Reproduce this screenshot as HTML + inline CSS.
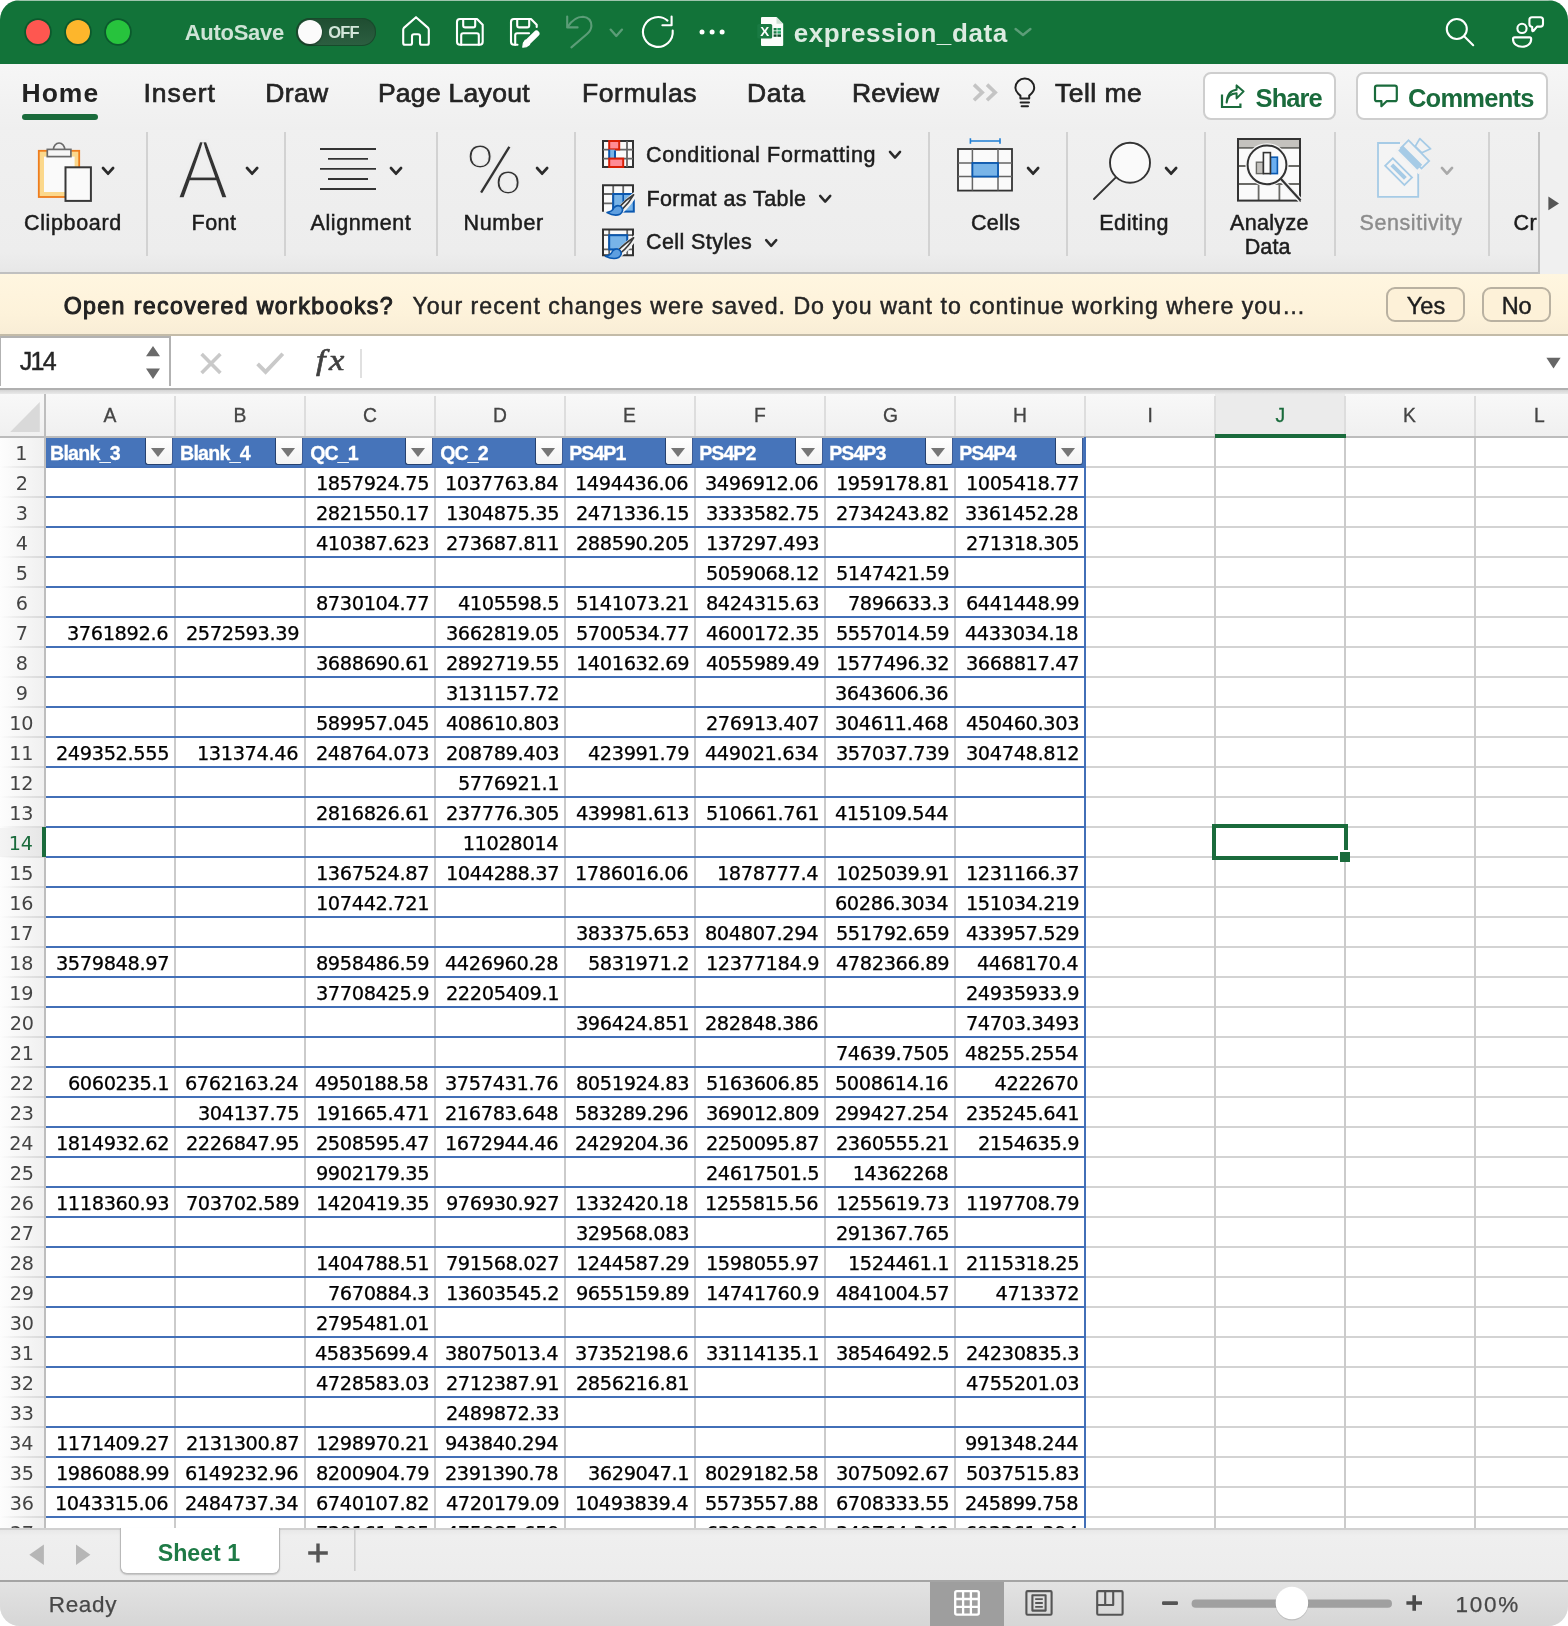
<!DOCTYPE html>
<html lang="en"><head><meta charset="utf-8"><title>expression_data</title>
<style>
*{box-sizing:border-box;margin:0;padding:0}
html,body{width:1568px;height:1626px;background:#fff;overflow:hidden}
body{font-family:"Liberation Sans","DejaVu Sans",sans-serif;color:#222;-webkit-font-smoothing:antialiased}
#win{position:absolute;left:0;top:0;width:1568px;height:1626px;border-radius:20px;overflow:hidden;background:#ececec;will-change:transform}
.abs{position:absolute}
svg{position:absolute;overflow:visible}
/* title bar */
#titlebar{position:absolute;left:0;top:0;width:1568px;height:64px;background:#127339;box-shadow:inset 0 1px 0 #9ec4ad}
.tl{position:absolute;top:20px;width:24px;height:24px;border-radius:50%;box-shadow:0 0 0 1.8px #0b5a2d}
#titlebar .tt{position:absolute;color:#d3e6da;font-weight:bold;white-space:nowrap}
.t{position:absolute;line-height:1;white-space:nowrap}
/* tabs */
#tabs{position:absolute;left:0;top:64px;width:1568px;height:66px;background:linear-gradient(#f6f6f6,#efefef)}
#tabs .tab{position:absolute;top:13px;font-size:26.5px;line-height:32px;color:#262626;white-space:nowrap}
.btn{position:absolute;top:8px;height:48px;background:#fff;border:2px solid #cecece;border-radius:8px;color:#1a7440;font-weight:bold;font-size:25px;line-height:46px;white-space:nowrap}
/* ribbon */
#ribbon{position:absolute;left:0;top:130px;width:1568px;height:144px;background:linear-gradient(#f0f0f0,#ededed 85%,#e7e7e7)}
#ribbon .sep{position:absolute;top:2px;width:2px;height:124px;background:#d2d2d2}
#ribbon .lbl{position:absolute;font-size:21px;line-height:24px;color:#1c1c1c;text-align:center;white-space:nowrap;letter-spacing:.3px}
/* msg bar */
#msgbar{position:absolute;left:0;top:273.5px;width:1568px;height:62px;background:linear-gradient(#fff6e0,#fdf2da 65%,#f8edd6);box-shadow:inset 0 -2px 0 #c3bba8}
.mbtn{position:absolute;top:13px;height:35px;border:2px solid #b9b1a1;border-radius:9px;background:#fdf1d8}
/* formula */
#formula{position:absolute;left:0;top:335.5px;width:1568px;height:58.5px;background:#fff}
/* grid */
#grid{position:absolute;left:0;top:394px;width:1568px;height:1134px;background:#fff;overflow:hidden}
.fb{position:absolute;width:27.6px;height:26.6px;background:linear-gradient(#ffffff,#f2f2f2);border-left:1.8px solid #26416f;border-bottom:1.8px solid #26416f;border-right:1px solid #3a5a94;border-radius:0 0 3px 3px}
.fb:after{content:"";position:absolute;left:5.2px;top:9.6px;border-left:7.8px solid transparent;border-right:7.8px solid transparent;border-top:9.2px solid #757575}
/* sheet tabs */
#sheettabs{position:absolute;left:0;top:1528px;width:1568px;height:53px;background:linear-gradient(#e6e6e6,#efefef 8px,#ececec)}
#status{position:absolute;left:0;top:1580px;width:1568px;height:46px;background:linear-gradient(#e3e3e3,#d6d6d6);box-shadow:inset 0 2px 0 #a4a4a4}

</style></head>
<body>
<div id="win">
<div id="titlebar">
  <div class="tl" style="left:26px;background:#fe5750"></div>
  <div class="tl" style="left:66px;background:#fdb62c"></div>
  <div class="tl" style="left:106px;background:#27c33d"></div>
  <span class="t" style="left:184.70px;top:21.60px;font-size:22px;font-weight:bold;letter-spacing:-0.276px;color:#cfe4d6;">AutoSave</span>
  <div class="abs" style="left:296px;top:18px;width:80px;height:28px;border-radius:14px;background:linear-gradient(#1f4d31,#2c5f41);box-shadow:inset 0 0 0 1px #174a2b"></div>
  <div class="abs" style="left:298px;top:20px;width:24px;height:24px;border-radius:50%;background:#fbfbfb;box-shadow:0 1px 2px rgba(0,0,0,.45)"></div>
  <span class="t" style="left:328.20px;top:23.60px;font-size:16.5px;font-weight:bold;letter-spacing:-0.807px;color:#d3e6da;">OFF</span>
  <svg width="1568" height="64" viewBox="0 0 1568 64" style="left:0;top:0" fill="none" stroke="#fff" stroke-width="2.1" stroke-linecap="round" stroke-linejoin="round">
    <!-- home -->
    <path d="M416 17.2 L404.2 27.6 Q403.2 28.6 403.2 30 V43 Q403.2 44.8 405 44.8 H410.2 Q412 44.8 412 43 V36.2 Q412 34.2 414 34.2 H418 Q420 34.2 420 36.2 V43 Q420 44.8 421.8 44.8 H427 Q428.8 44.8 428.8 43 V30 Q428.8 28.6 427.8 27.6 Z"/>
    <!-- save -->
    <path d="M460 19 H477 L482.7 24.8 V41.8 Q482.7 44.8 479.7 44.8 H460 Q457 44.8 457 41.8 V22 Q457 19 460 19 Z"/>
    <path d="M463.2 19 V25.4 Q463.2 27.4 465.2 27.4 H473.2 Q475.2 27.4 475.2 25.4 V19"/>
    <path d="M461.2 44.8 V35.2 Q461.2 33.2 463.2 33.2 H476.8 Q478.8 33.2 478.8 35.2 V44.8"/>
    <!-- save edit -->
    <path d="M536.7 27 V24.8 L531 19 H514 Q511 19 511 22 V41.8 Q511 44.8 514 44.8 H517.5"/>
    <path d="M517.2 19 V25.4 Q517.2 27.4 519.2 27.4 H527.2 Q529.2 27.4 529.2 25.4 V19"/>
    <path d="M515.2 44.8 V35.2 Q515.2 33.2 517.2 33.2 H529"/>
    <path d="M536.4 33.6 L527.4 42.4" stroke-width="6.2"/>
    <path d="M525.4 40.2 L529.6 44.6 L526.6 46.6 L522.8 47.2 L523.4 43 Z" fill="#fff" stroke-width="1.2"/>
    <!-- undo (dim) -->
    <g stroke="#5c9d78">
      <path d="M567.2 16.6 V27.4 H577.6"/>
      <path d="M567.6 27 Q574 16.8 583 16.8 Q591.4 17.6 591.4 26 Q591.2 30.4 587 34 L571.4 47.4"/>
      <path d="M610.6 29.6 L616.3 36 L622 29.6" stroke-width="2.3"/>
    </g>
    <!-- redo -->
    <path d="M672.7 30.6 A14.9 14.9 0 1 1 667.5 20.6"/>
    <path d="M671.6 16.6 V25.2 H662.4"/>
    <!-- ellipsis -->
    <g fill="#fff" stroke="none"><circle cx="702" cy="32" r="2.5"/><circle cx="712.1" cy="32" r="2.5"/><circle cx="722.1" cy="32" r="2.5"/></g>
    <!-- file icon -->
    <g stroke="none">
      <path d="M762 17 H776.5 L783.2 23.8 V45 Q783.2 46 782.2 46 H762 Q761 46 761 45 V18 Q761 17 762 17 Z" fill="#fbfdfb"/>
      <path d="M776.5 17 L783.2 23.8 H776.5 Z" fill="#cfe1d5"/>
      <rect x="773.6" y="28" width="3" height="2.4" fill="#1d7a45"/><rect x="777.4" y="28" width="3.6" height="2.4" fill="#21a366"/>
      <rect x="773.6" y="31.2" width="3" height="2.4" fill="#1d7a45"/><rect x="777.4" y="31.2" width="3.6" height="2.4" fill="#21a366"/>
      <rect x="773.6" y="34.4" width="3" height="2.4" fill="#0e4d29"/><rect x="777.4" y="34.4" width="3.6" height="2.4" fill="#0e4d29"/>
      <rect x="757.2" y="24" width="15" height="14.6" rx="1.5" fill="#1a7a43"/>
    </g>
    <text x="764.7" y="36.4" font-family="Liberation Sans, sans-serif" font-size="13.5" font-weight="bold" fill="#fff" stroke="none" text-anchor="middle">X</text>
    <!-- title chevron -->
    <path d="M1015.6 29 L1023 35 L1030.4 29" stroke="#5c9d78" stroke-width="2.4"/>
    <!-- search -->
    <circle cx="1456.8" cy="29" r="10"/>
    <path d="M1464.4 36.6 L1473.2 45.2"/>
    <!-- people -->
    <circle cx="1522" cy="28.4" r="4.6"/>
    <path d="M1513 39 Q1513 37.4 1514.6 37.4 H1529.6 Q1531.2 37.4 1531.2 39 C1531.2 44 1527 46.8 1522.1 46.8 C1517.2 46.8 1513 44 1513 39 Z"/>
    <path d="M1532 17.2 H1540.4 Q1543 17.2 1543 19.8 V24 Q1543 26.6 1540.4 26.6 H1537 L1533.4 31 Q1532.6 31.6 1532.2 30.6 V27 Q1529.4 26.6 1529.4 24 V19.8 Q1529.4 17.2 1532 17.2 Z"/>
  </svg>
  <span class="t" style="left:793.70px;top:19.50px;font-size:26px;font-weight:bold;letter-spacing:0.589px;color:#dcebe1;">expression_data</span>
</div>

<div id="tabs">
  <span class="t" style="left:21.60px;top:16.40px;font-size:26.5px;font-weight:bold;letter-spacing:0.971px;color:#222;">Home</span>
  <div class="abs" style="left:22px;top:50px;width:76px;height:6px;border-radius:3px;background:#1a6b3c"></div>
  <span class="t" style="left:143.40px;top:16.40px;font-size:26.5px;letter-spacing:1.057px;color:#242424;-webkit-text-stroke:.7px #242424;">Insert</span>
  <span class="t" style="left:265.30px;top:16.40px;font-size:26.5px;letter-spacing:0.333px;color:#242424;-webkit-text-stroke:.7px #242424;">Draw</span>
  <span class="t" style="left:377.90px;top:16.40px;font-size:26.5px;letter-spacing:0.285px;color:#242424;-webkit-text-stroke:.7px #242424;">Page Layout</span>
  <span class="t" style="left:582.00px;top:16.40px;font-size:26.5px;letter-spacing:0.573px;color:#242424;-webkit-text-stroke:.7px #242424;">Formulas</span>
  <span class="t" style="left:747.10px;top:16.40px;font-size:26.5px;letter-spacing:0.621px;color:#242424;-webkit-text-stroke:.7px #242424;">Data</span>
  <span class="t" style="left:852.00px;top:16.40px;font-size:26.5px;letter-spacing:0.030px;color:#242424;-webkit-text-stroke:.7px #242424;">Review</span>
  <span class="t" style="left:1055.00px;top:16.40px;font-size:26.5px;letter-spacing:0.467px;color:#242424;-webkit-text-stroke:.7px #242424;">Tell me</span>
  <svg width="1568" height="66" viewBox="0 64 1568 66" style="left:0;top:0" fill="none" stroke-linecap="round" stroke-linejoin="round">
    <path d="M974 84.6 L982.2 92.4 L974 100.2 M987 84.6 L995.2 92.4 L987 100.2" stroke="#c4c4c4" stroke-width="3.6" stroke-linecap="butt" stroke-linejoin="miter"/>
    <!-- bulb -->
    <path d="M1020.4 98.6 V95.6 Q1015.4 91.8 1015.4 87.8 A9.4 9.4 0 0 1 1034.2 87.8 Q1034.2 91.8 1029.2 95.6 V98.6 Z M1020.6 102.4 H1029 M1021.6 106.2 H1028" stroke="#222" stroke-width="2"/>
  </svg>
  <div class="btn" style="left:1203px;width:133px"></div>
  <div class="btn" style="left:1356px;width:192px"></div>
  <span class="t" style="left:1255.60px;top:21.90px;font-size:25.5px;font-weight:bold;letter-spacing:-0.923px;color:#1a6b3c;">Share</span>
  <span class="t" style="left:1407.90px;top:21.90px;font-size:25.5px;font-weight:bold;letter-spacing:-0.741px;color:#1a6b3c;">Comments</span>
  <svg width="1568" height="66" viewBox="0 64 1568 66" style="left:0;top:0" fill="none" stroke="#1a6b3c" stroke-width="2.2" stroke-linejoin="miter">
    <path d="M1222 94.6 V107 H1240.4 V103.4"/>
    <path d="M1226.6 102.6 Q1227.6 93.6 1236.6 93.2 V98.4 L1243.6 91.4 L1236.6 85.4 V89.8 Q1227.4 90.6 1226.6 102.6 Z" stroke-width="2" stroke-linejoin="round"/>
    <path d="M1377 85.6 H1394.8 Q1396.8 85.6 1396.8 87.6 V99.2 Q1396.8 101.2 1394.8 101.2 H1386.6 L1381.4 106.2 V101.2 H1377 Q1375 101.2 1375 99.2 V87.6 Q1375 85.6 1377 85.6 Z" stroke-linejoin="round"/>
  </svg>
</div>

<div id="ribbon">
  <div class="abs" style="left:0;top:141.8px;width:1540px;height:1.8px;background:#c0c0c0"></div>
  <div class="abs" style="left:1538px;top:2px;width:2px;height:141.5px;background:#c2c2c2"></div>
  <div class="abs" style="left:1540px;top:0;width:28px;height:144px;background:#f0f0f0"></div>
  <div class="sep" style="left:146px"></div><div class="sep" style="left:284px"></div><div class="sep" style="left:436px"></div><div class="sep" style="left:574px"></div>
  <div class="sep" style="left:928px"></div><div class="sep" style="left:1066px"></div><div class="sep" style="left:1204px"></div><div class="sep" style="left:1334px"></div><div class="sep" style="left:1488px"></div>
  <svg width="1568" height="142" viewBox="0 130 1568 142" style="left:0;top:0" fill="none" stroke-linecap="round" stroke-linejoin="round">
    <!-- clipboard -->
    <rect x="38.8" y="150.8" width="40.4" height="46.2" fill="#fbd88c" stroke="#ee7d1c" stroke-width="1.8" stroke-linejoin="miter"/>
    <rect x="44" y="156.6" width="30.6" height="35.4" fill="#fafafa"/>
    <path d="M53.4 149.8 A5.7 6.8 0 0 1 64.8 149.8" stroke="#6a6a6a" stroke-width="1.7" fill="#f0f0f0"/>
    <rect x="47.3" y="149.4" width="23.6" height="7.2" fill="#f6f6f6" stroke="#6a6a6a" stroke-width="1.7" stroke-linejoin="miter"/>
    <rect x="65.5" y="167.3" width="25.4" height="33.6" fill="#fafafa" stroke="#383838" stroke-width="2" stroke-linejoin="miter"/>
    <!-- chevrons -->
    <g stroke="#2b2b2b" stroke-width="2.7" stroke-linecap="round" stroke-linejoin="round">
      <path d="M103.00 168.00 L108.05 173.70 L113.10 168.00"/>
      <path d="M247.05 168.00 L252.10 173.70 L257.15 168.00"/>
      <path d="M390.95 168.00 L396.00 173.70 L401.05 168.00"/>
      <path d="M537.05 168.00 L542.10 173.70 L547.15 168.00"/>
      <path d="M1028.05 168.00 L1033.10 173.70 L1038.15 168.00"/>
      <path d="M1166.05 168.00 L1171.10 173.70 L1176.15 168.00"/>
      <path d="M889.95 151.90 L895.00 157.60 L900.05 151.90" stroke-width="2.5"/>
      <path d="M820.15 195.90 L825.20 201.60 L830.25 195.90" stroke-width="2.5"/>
      <path d="M766.15 240.20 L771.20 245.90 L776.25 240.20" stroke-width="2.5"/>
      <path d="M1441.95 167.90 L1447.00 173.60 L1452.05 167.90" stroke="#a9a9a9"/>
    </g>
    <!-- alignment -->
    <path d="M320 149 H376 M328 158.9 H368 M320 168.9 H376 M328 179 H368 M320 189 H376" stroke="#333" stroke-width="1.9" stroke-linecap="butt"/>
    <!-- conditional formatting -->
    <g stroke-linejoin="miter" stroke-linecap="butt">
      <rect x="603" y="141" width="30" height="26" fill="#fafafa" stroke="#333" stroke-width="2"/>
      <path d="M603 149.6 H633 M603 158.6 H633 M627 141 V167" stroke="#666" stroke-width="1.8"/>
      <rect x="609.2" y="141" width="10" height="8.4" fill="#ff8b95" stroke="#d81e05" stroke-width="2"/>
      <rect x="609.2" y="149.6" width="5.8" height="9" fill="#78b4e8" stroke="none"/><path d="M609.2 149.6 V158.6 M615 150.4 V158.6" stroke="#0a58b0" stroke-width="2"/>
      <rect x="609.2" y="158.6" width="14" height="8.4" fill="#ff8b95" stroke="#d81e05" stroke-width="2"/>
      <!-- format as table -->
      <rect x="603" y="185.2" width="30" height="25.8" fill="#fafafa" stroke="none"/>
      <path d="M603 194 H633 M603 203.4 H633 M613.2 185 V211 M623.2 185 V211" stroke="#666" stroke-width="1.8"/>
      <rect x="613.2" y="194" width="20.6" height="17.6" fill="#78b4e8" stroke="#0a58b0" stroke-width="2"/>
      <path d="M623.2 194 V211" stroke="#0a58b0" stroke-width="1.6"/>
      <path d="M603 211.8 V185.2 H633 V193" stroke="#333" stroke-width="2"/>
      <path d="M635.5 192.5 Q629 197 617 209.6 L621.4 213 Q632 203 636.6 194 Z" fill="#f1f1f1" stroke="#f1f1f1" stroke-width="2.2" stroke-linejoin="round"/>
      <path d="M633.6 194.8 Q626 199.6 618.6 207.8 L621.4 210.2 Q629 203 633.6 194.8 Z" fill="#f4f4f4" stroke="#3a3a3a" stroke-width="1.6" stroke-linejoin="round"/>
      <path d="M607 212.6 Q612.6 211.6 614 207.6 Q617.6 203.8 621.6 207.2 Q624.2 211.2 620 214.2 Q614.6 216.6 607 212.6 Z" fill="#5e9fe0" stroke="#0a58b0" stroke-width="1.6" stroke-linejoin="round"/>
      <!-- cell styles -->
      <rect x="603" y="229.4" width="30" height="25.8" fill="#fafafa" stroke="none"/>
      <path d="M603 235.2 H633 M603 249.4 H633 M609.2 229 V255 M627.2 229 V255" stroke="#666" stroke-width="1.8"/>
      <rect x="609.2" y="235.2" width="18" height="14.2" fill="#78b4e8" stroke="#0a58b0" stroke-width="2"/>
      <path d="M603 229.4 H633 V255.2 H603 Z" stroke="#333" stroke-width="2"/>
      <path d="M635.5 235.5 Q629 240 616 252.6 L620.4 256 Q632 246 636.6 237 Z" fill="#f1f1f1" stroke="#f1f1f1" stroke-width="2.2" stroke-linejoin="round"/>
      <path d="M633.6 237.8 Q626 242.6 617.6 250.8 L620.4 253.2 Q629 246 633.6 237.8 Z" fill="#f4f4f4" stroke="#3a3a3a" stroke-width="1.6" stroke-linejoin="round"/>
      <path d="M605.4 256.2 Q611.2 255.2 612.6 251 Q616.2 247.2 620.2 250.6 Q622.8 254.6 618.6 257.6 Q613.2 260 605.4 256.2 Z" fill="#5e9fe0" stroke="#0a58b0" stroke-width="1.6" stroke-linejoin="round"/>
    </g>
    <!-- cells -->
    <g stroke-linejoin="miter" stroke-linecap="butt">
      <rect x="958" y="149" width="54" height="41.6" fill="#fafafa" stroke="#333" stroke-width="1.8"/>
      <path d="M958 163 H1012 M958 176.6 H1012 M972.4 149 V190.6 M998 149 V190.6" stroke="#666" stroke-width="1.5"/>
      <rect x="972.4" y="163" width="25.6" height="13.6" fill="#78b4e8" stroke="#0a58b0" stroke-width="1.8"/>
      <path d="M970.4 141 H1000 M970.4 138.2 V143.8 M1000 138.2 V143.8" stroke="#1e7ed4" stroke-width="1.6"/>
    </g>
    <!-- editing -->
    <circle cx="1130" cy="162.8" r="20" fill="#fafafa" stroke="#333" stroke-width="1.9"/>
    <path d="M1115.6 177.6 L1094 199" stroke="#333" stroke-width="1.9"/>
    <!-- analyze data -->
    <g stroke-linejoin="miter" stroke-linecap="butt">
      <rect x="1238" y="139" width="62" height="61.6" fill="#fafafa" stroke="none"/>
      <rect x="1238" y="139" width="62" height="8.6" fill="#c4c2be"/>
      <path d="M1238 147.8 H1300 M1238 166 H1300 M1238 184 H1300 M1258.6 184 V200.6 M1279.4 184 V200.6" stroke="#6a6a66" stroke-width="1.8"/>
      <rect x="1238" y="139" width="62" height="61.6" stroke="#333" stroke-width="2"/>
      <circle cx="1267" cy="164.8" r="21.6" fill="#f6f6f6" stroke="none"/>
      <path d="M1281 179 L1300.6 200.6" stroke="#f2f2f2" stroke-width="5"/>
      <circle cx="1267" cy="164.8" r="19.4" fill="#fafafa" stroke="#333" stroke-width="2"/>
      <path d="M1281 179 L1300.6 200.6" stroke="#333" stroke-width="2.2"/>
      <rect x="1256.4" y="162.2" width="7" height="11.4" fill="#c4c2be" stroke="#6a6a66" stroke-width="1.4"/>
      <rect x="1270.4" y="157.2" width="7" height="16.4" fill="#6aaef0" stroke="#0a58b0" stroke-width="1.6"/>
      <rect x="1263.4" y="152.6" width="7" height="21" fill="#fafafa" stroke="#333" stroke-width="1.6"/>
    </g>
    <!-- sensitivity (disabled) -->
    <g stroke="#a6cbe6" stroke-width="1.8" stroke-linejoin="miter" stroke-linecap="butt">
      <rect x="1378" y="143" width="40.2" height="53.8" fill="#f4f4f4" stroke="none"/>
      <path d="M1400 143 H1378 V196.8 H1418.2 V172"/>
      <g transform="translate(1398.6 171.6) rotate(45)">
        <rect x="-13.6" y="-5.4" width="27.2" height="10.8" fill="#f4f4f4"/>
        <rect x="-9.6" y="-2" width="19.2" height="4" fill="#a6cbe6" stroke="none"/>
      </g>
      <path d="M1415.2 146.4 L1419.8 138.6 L1430.6 148.8 L1421.8 152.8 Z" fill="#f2f2f2" stroke-linejoin="round"/>
      <g transform="translate(1415 154.4) rotate(45)">
        <rect x="-16.6" y="-5.4" width="33.2" height="17" fill="#f2f2f2" stroke="none"/>
        <rect x="-14.6" y="-5.4" width="29.2" height="10.8" fill="#f2f2f2"/>
        <rect x="-14.6" y="2.2" width="27" height="7" fill="#a6cbe6" stroke="none"/>
      </g>
    </g>
    <!-- scroll arrow -->
    <path d="M1548.4 196.6 L1559 203.4 L1548.4 210.2 Z" fill="#555" stroke="none"/>
  </svg>
  <!-- big glyph icons as text -->
  <span class="abs" id="bigA" style="left:177.4px;top:-2.2px;font-size:84.5px;line-height:1;color:#333;-webkit-text-stroke:3.4px #eeeeee;transform:scaleX(.92);transform-origin:0 0">A</span>
  <span class="t" id="pc1" style="left:467.5px;top:10.8px;font-size:32.5px;color:#333;-webkit-text-stroke:1.2px #eeeeee">O</span>
  <span class="t" id="pc2" style="left:495.5px;top:36.8px;font-size:32.5px;color:#333;-webkit-text-stroke:1.2px #eeeeee">O</span>
  <span class="t" id="pc3" style="left:486.5px;top:4.6px;font-size:60px;color:#333;-webkit-text-stroke:2.4px #eeeeee;transform:rotate(31.6deg);transform-origin:7.8px 35.5px">|</span>
  <span class="t" style="left:24.00px;top:83.00px;font-size:21.5px;letter-spacing:0.641px;color:#1c1c1c;-webkit-text-stroke:.5px #1c1c1c;">Clipboard</span>
  <span class="t" style="left:191.60px;top:83.00px;font-size:21.5px;letter-spacing:0.451px;color:#1c1c1c;-webkit-text-stroke:.5px #1c1c1c;">Font</span>
  <span class="t" style="left:310.60px;top:83.00px;font-size:21.5px;letter-spacing:0.558px;color:#1c1c1c;-webkit-text-stroke:.5px #1c1c1c;">Alignment</span>
  <span class="t" style="left:463.60px;top:83.00px;font-size:21.5px;letter-spacing:0.618px;color:#1c1c1c;-webkit-text-stroke:.5px #1c1c1c;">Number</span>
  <span class="t" style="left:646.00px;top:15.00px;font-size:21.5px;letter-spacing:0.631px;color:#1c1c1c;-webkit-text-stroke:.5px #1c1c1c;">Conditional Formatting</span>
  <span class="t" style="left:646.40px;top:58.60px;font-size:21.5px;letter-spacing:0.422px;color:#1c1c1c;-webkit-text-stroke:.5px #1c1c1c;">Format as Table</span>
  <span class="t" style="left:646.00px;top:102.20px;font-size:21.5px;letter-spacing:0.419px;color:#1c1c1c;-webkit-text-stroke:.5px #1c1c1c;">Cell Styles</span>
  <span class="t" style="left:971.00px;top:83.00px;font-size:21.5px;letter-spacing:0.316px;color:#1c1c1c;-webkit-text-stroke:.5px #1c1c1c;">Cells</span>
  <span class="t" style="left:1099.20px;top:83.00px;font-size:21.5px;letter-spacing:0.586px;color:#1c1c1c;-webkit-text-stroke:.5px #1c1c1c;">Editing</span>
  <span class="t" style="left:1230.00px;top:83.00px;font-size:21.5px;letter-spacing:0.328px;color:#1c1c1c;-webkit-text-stroke:.5px #1c1c1c;">Analyze</span>
  <span class="t" style="left:1244.80px;top:106.60px;font-size:21.5px;letter-spacing:0.048px;color:#1c1c1c;-webkit-text-stroke:.5px #1c1c1c;">Data</span>
  <span class="t" style="left:1359.60px;top:83.00px;font-size:21.5px;letter-spacing:0.557px;color:#8c8c8c;-webkit-text-stroke:.4px #8c8c8c;">Sensitivity</span>
  <div class="abs" style="left:1500px;top:70px;width:37.6px;height:40px;overflow:hidden"><span class="t" style="left:13.50px;top:13.00px;font-size:21.5px;letter-spacing:0.473px;color:#1c1c1c;-webkit-text-stroke:.5px #1c1c1c;">Cr</span></div>
</div>

<div id="msgbar">
  <span class="t" style="left:63.70px;top:21.60px;font-size:23.2px;letter-spacing:1.356px;color:#222;-webkit-text-stroke:1px #222;">Open recovered workbooks?</span>
  <span class="t" style="left:412.40px;top:21.60px;font-size:23.2px;letter-spacing:0.977px;color:#242424;-webkit-text-stroke:.45px #242424;">Your recent changes were saved. Do you want to continue working where you…</span>
  <div class="mbtn" style="left:1386.4px;width:79px"></div>
  <div class="mbtn" style="left:1482.4px;width:69px"></div>
  <span class="t" style="left:1406.70px;top:21.60px;font-size:23.5px;letter-spacing:0.157px;color:#1e1e1e;-webkit-text-stroke:.45px #1e1e1e;">Yes</span>
  <span class="t" style="left:1501.80px;top:21.60px;font-size:23.5px;letter-spacing:-0.171px;color:#1e1e1e;-webkit-text-stroke:.45px #1e1e1e;">No</span>
</div>

<div id="formula">
  <div class="abs" style="left:0;top:0;width:170.5px;height:50.5px;background:#fff;border:2px solid #b2b2b2;border-left-width:1.5px;border-bottom:none"></div>
  <div class="abs" style="left:0;top:52.5px;width:1568px;height:2px;background:#b0b0b0"></div>
  <div class="abs" style="left:0;top:54.5px;width:1568px;height:4px;background:linear-gradient(#d4d4d4,#e9e9e9)"></div>
  <span class="t" style="left:19.80px;top:13.60px;font-size:25px;letter-spacing:-1.702px;color:#262626;-webkit-text-stroke:.45px #262626;">J14</span>
  <svg width="1568" height="59" viewBox="0 335.5 1568 59" style="left:0;top:0" fill="none">
    <path d="M146 355.8 L153 345.4 L160 355.8 Z M146 368 L153 378.6 L160 368 Z" fill="#6a6a6a"/>
    <path d="M201.6 353.4 L220.4 372.4 M220.4 353.4 L201.6 372.4" stroke="#c9c9c9" stroke-width="3.6"/>
    <path d="M257.6 363.4 L265.6 371.4 L282.8 353.2" stroke="#c9c9c9" stroke-width="3.8"/>
    <path d="M361 348.4 V377.6" stroke="#d9d9d9" stroke-width="1.6"/>
    <path d="M1546.4 357.2 H1560.6 L1553.5 368 Z" fill="#666"/>
  </svg>
  <span class="abs" style="left:316.4px;top:9px;font-family:'Liberation Serif','DejaVu Serif',serif;font-style:italic;font-size:30px;line-height:1;color:#404040;letter-spacing:3px;-webkit-text-stroke:.6px #404040;transform:scaleX(1.15);transform-origin:0 0">fx</span>
</div>

<div id="grid">
<div class="abs" style="left:0px;top:0px;width:1568px;height:42px;background:linear-gradient(#f8f8f8,#f0f0f0);"></div>
<div class="abs" style="left:1215px;top:0px;width:130px;height:42px;background:#ebebeb;"></div>
<div class="abs" style="left:0px;top:43px;width:44px;height:1100px;background:linear-gradient(90deg,#fdfdfd,#f0f0f0);"></div>
<div class="abs" style="left:0px;top:434px;width:44px;height:29px;background:linear-gradient(90deg,#f4f4f4,#e6e6e6);"></div>
<div class="abs" style="left:0px;top:72px;width:44px;height:2px;background:linear-gradient(90deg,rgba(215,215,215,0),#d9d9d9);"></div>
<div class="abs" style="left:0px;top:102px;width:44px;height:2px;background:linear-gradient(90deg,rgba(215,215,215,0),#d9d9d9);"></div>
<div class="abs" style="left:0px;top:132px;width:44px;height:2px;background:linear-gradient(90deg,rgba(215,215,215,0),#d9d9d9);"></div>
<div class="abs" style="left:0px;top:162px;width:44px;height:2px;background:linear-gradient(90deg,rgba(215,215,215,0),#d9d9d9);"></div>
<div class="abs" style="left:0px;top:192px;width:44px;height:2px;background:linear-gradient(90deg,rgba(215,215,215,0),#d9d9d9);"></div>
<div class="abs" style="left:0px;top:222px;width:44px;height:2px;background:linear-gradient(90deg,rgba(215,215,215,0),#d9d9d9);"></div>
<div class="abs" style="left:0px;top:252px;width:44px;height:2px;background:linear-gradient(90deg,rgba(215,215,215,0),#d9d9d9);"></div>
<div class="abs" style="left:0px;top:282px;width:44px;height:2px;background:linear-gradient(90deg,rgba(215,215,215,0),#d9d9d9);"></div>
<div class="abs" style="left:0px;top:312px;width:44px;height:2px;background:linear-gradient(90deg,rgba(215,215,215,0),#d9d9d9);"></div>
<div class="abs" style="left:0px;top:342px;width:44px;height:2px;background:linear-gradient(90deg,rgba(215,215,215,0),#d9d9d9);"></div>
<div class="abs" style="left:0px;top:372px;width:44px;height:2px;background:linear-gradient(90deg,rgba(215,215,215,0),#d9d9d9);"></div>
<div class="abs" style="left:0px;top:402px;width:44px;height:2px;background:linear-gradient(90deg,rgba(215,215,215,0),#d9d9d9);"></div>
<div class="abs" style="left:0px;top:432px;width:44px;height:2px;background:linear-gradient(90deg,rgba(215,215,215,0),#d9d9d9);"></div>
<div class="abs" style="left:0px;top:462px;width:44px;height:2px;background:linear-gradient(90deg,rgba(215,215,215,0),#d9d9d9);"></div>
<div class="abs" style="left:0px;top:492px;width:44px;height:2px;background:linear-gradient(90deg,rgba(215,215,215,0),#d9d9d9);"></div>
<div class="abs" style="left:0px;top:522px;width:44px;height:2px;background:linear-gradient(90deg,rgba(215,215,215,0),#d9d9d9);"></div>
<div class="abs" style="left:0px;top:552px;width:44px;height:2px;background:linear-gradient(90deg,rgba(215,215,215,0),#d9d9d9);"></div>
<div class="abs" style="left:0px;top:582px;width:44px;height:2px;background:linear-gradient(90deg,rgba(215,215,215,0),#d9d9d9);"></div>
<div class="abs" style="left:0px;top:612px;width:44px;height:2px;background:linear-gradient(90deg,rgba(215,215,215,0),#d9d9d9);"></div>
<div class="abs" style="left:0px;top:642px;width:44px;height:2px;background:linear-gradient(90deg,rgba(215,215,215,0),#d9d9d9);"></div>
<div class="abs" style="left:0px;top:672px;width:44px;height:2px;background:linear-gradient(90deg,rgba(215,215,215,0),#d9d9d9);"></div>
<div class="abs" style="left:0px;top:702px;width:44px;height:2px;background:linear-gradient(90deg,rgba(215,215,215,0),#d9d9d9);"></div>
<div class="abs" style="left:0px;top:732px;width:44px;height:2px;background:linear-gradient(90deg,rgba(215,215,215,0),#d9d9d9);"></div>
<div class="abs" style="left:0px;top:762px;width:44px;height:2px;background:linear-gradient(90deg,rgba(215,215,215,0),#d9d9d9);"></div>
<div class="abs" style="left:0px;top:792px;width:44px;height:2px;background:linear-gradient(90deg,rgba(215,215,215,0),#d9d9d9);"></div>
<div class="abs" style="left:0px;top:822px;width:44px;height:2px;background:linear-gradient(90deg,rgba(215,215,215,0),#d9d9d9);"></div>
<div class="abs" style="left:0px;top:852px;width:44px;height:2px;background:linear-gradient(90deg,rgba(215,215,215,0),#d9d9d9);"></div>
<div class="abs" style="left:0px;top:882px;width:44px;height:2px;background:linear-gradient(90deg,rgba(215,215,215,0),#d9d9d9);"></div>
<div class="abs" style="left:0px;top:912px;width:44px;height:2px;background:linear-gradient(90deg,rgba(215,215,215,0),#d9d9d9);"></div>
<div class="abs" style="left:0px;top:942px;width:44px;height:2px;background:linear-gradient(90deg,rgba(215,215,215,0),#d9d9d9);"></div>
<div class="abs" style="left:0px;top:972px;width:44px;height:2px;background:linear-gradient(90deg,rgba(215,215,215,0),#d9d9d9);"></div>
<div class="abs" style="left:0px;top:1002px;width:44px;height:2px;background:linear-gradient(90deg,rgba(215,215,215,0),#d9d9d9);"></div>
<div class="abs" style="left:0px;top:1032px;width:44px;height:2px;background:linear-gradient(90deg,rgba(215,215,215,0),#d9d9d9);"></div>
<div class="abs" style="left:0px;top:1062px;width:44px;height:2px;background:linear-gradient(90deg,rgba(215,215,215,0),#d9d9d9);"></div>
<div class="abs" style="left:0px;top:1092px;width:44px;height:2px;background:linear-gradient(90deg,rgba(215,215,215,0),#d9d9d9);"></div>
<div class="abs" style="left:0px;top:1122px;width:44px;height:2px;background:linear-gradient(90deg,rgba(215,215,215,0),#d9d9d9);"></div>
<div class="abs" style="left:0px;top:1152px;width:44px;height:2px;background:linear-gradient(90deg,rgba(215,215,215,0),#d9d9d9);"></div>
<div class="abs" style="left:1086px;top:72px;width:482px;height:2px;background:#d3d3d3;"></div>
<div class="abs" style="left:1086px;top:102px;width:482px;height:2px;background:#d3d3d3;"></div>
<div class="abs" style="left:1086px;top:132px;width:482px;height:2px;background:#d3d3d3;"></div>
<div class="abs" style="left:1086px;top:162px;width:482px;height:2px;background:#d3d3d3;"></div>
<div class="abs" style="left:1086px;top:192px;width:482px;height:2px;background:#d3d3d3;"></div>
<div class="abs" style="left:1086px;top:222px;width:482px;height:2px;background:#d3d3d3;"></div>
<div class="abs" style="left:1086px;top:252px;width:482px;height:2px;background:#d3d3d3;"></div>
<div class="abs" style="left:1086px;top:282px;width:482px;height:2px;background:#d3d3d3;"></div>
<div class="abs" style="left:1086px;top:312px;width:482px;height:2px;background:#d3d3d3;"></div>
<div class="abs" style="left:1086px;top:342px;width:482px;height:2px;background:#d3d3d3;"></div>
<div class="abs" style="left:1086px;top:372px;width:482px;height:2px;background:#d3d3d3;"></div>
<div class="abs" style="left:1086px;top:402px;width:482px;height:2px;background:#d3d3d3;"></div>
<div class="abs" style="left:1086px;top:432px;width:482px;height:2px;background:#d3d3d3;"></div>
<div class="abs" style="left:1086px;top:462px;width:482px;height:2px;background:#d3d3d3;"></div>
<div class="abs" style="left:1086px;top:492px;width:482px;height:2px;background:#d3d3d3;"></div>
<div class="abs" style="left:1086px;top:522px;width:482px;height:2px;background:#d3d3d3;"></div>
<div class="abs" style="left:1086px;top:552px;width:482px;height:2px;background:#d3d3d3;"></div>
<div class="abs" style="left:1086px;top:582px;width:482px;height:2px;background:#d3d3d3;"></div>
<div class="abs" style="left:1086px;top:612px;width:482px;height:2px;background:#d3d3d3;"></div>
<div class="abs" style="left:1086px;top:642px;width:482px;height:2px;background:#d3d3d3;"></div>
<div class="abs" style="left:1086px;top:672px;width:482px;height:2px;background:#d3d3d3;"></div>
<div class="abs" style="left:1086px;top:702px;width:482px;height:2px;background:#d3d3d3;"></div>
<div class="abs" style="left:1086px;top:732px;width:482px;height:2px;background:#d3d3d3;"></div>
<div class="abs" style="left:1086px;top:762px;width:482px;height:2px;background:#d3d3d3;"></div>
<div class="abs" style="left:1086px;top:792px;width:482px;height:2px;background:#d3d3d3;"></div>
<div class="abs" style="left:1086px;top:822px;width:482px;height:2px;background:#d3d3d3;"></div>
<div class="abs" style="left:1086px;top:852px;width:482px;height:2px;background:#d3d3d3;"></div>
<div class="abs" style="left:1086px;top:882px;width:482px;height:2px;background:#d3d3d3;"></div>
<div class="abs" style="left:1086px;top:912px;width:482px;height:2px;background:#d3d3d3;"></div>
<div class="abs" style="left:1086px;top:942px;width:482px;height:2px;background:#d3d3d3;"></div>
<div class="abs" style="left:1086px;top:972px;width:482px;height:2px;background:#d3d3d3;"></div>
<div class="abs" style="left:1086px;top:1002px;width:482px;height:2px;background:#d3d3d3;"></div>
<div class="abs" style="left:1086px;top:1032px;width:482px;height:2px;background:#d3d3d3;"></div>
<div class="abs" style="left:1086px;top:1062px;width:482px;height:2px;background:#d3d3d3;"></div>
<div class="abs" style="left:1086px;top:1092px;width:482px;height:2px;background:#d3d3d3;"></div>
<div class="abs" style="left:1086px;top:1122px;width:482px;height:2px;background:#d3d3d3;"></div>
<div class="abs" style="left:1086px;top:1152px;width:482px;height:2px;background:#d3d3d3;"></div>
<div class="abs" style="left:174px;top:43px;width:2px;height:1100px;background:#cbcbcb;"></div>
<div class="abs" style="left:304px;top:43px;width:2px;height:1100px;background:#cbcbcb;"></div>
<div class="abs" style="left:434px;top:43px;width:2px;height:1100px;background:#cbcbcb;"></div>
<div class="abs" style="left:564px;top:43px;width:2px;height:1100px;background:#cbcbcb;"></div>
<div class="abs" style="left:694px;top:43px;width:2px;height:1100px;background:#cbcbcb;"></div>
<div class="abs" style="left:824px;top:43px;width:2px;height:1100px;background:#cbcbcb;"></div>
<div class="abs" style="left:954px;top:43px;width:2px;height:1100px;background:#cbcbcb;"></div>
<div class="abs" style="left:1084px;top:43px;width:2px;height:1100px;background:#cbcbcb;"></div>
<div class="abs" style="left:1214px;top:43px;width:2px;height:1100px;background:#cbcbcb;"></div>
<div class="abs" style="left:1344px;top:43px;width:2px;height:1100px;background:#cbcbcb;"></div>
<div class="abs" style="left:1474px;top:43px;width:2px;height:1100px;background:#cbcbcb;"></div>
<div class="abs" style="left:1604px;top:43px;width:2px;height:1100px;background:#cbcbcb;"></div>
<div class="abs" style="left:174px;top:2px;width:2px;height:40px;background:#dddddd;"></div>
<div class="abs" style="left:304px;top:2px;width:2px;height:40px;background:#dddddd;"></div>
<div class="abs" style="left:434px;top:2px;width:2px;height:40px;background:#dddddd;"></div>
<div class="abs" style="left:564px;top:2px;width:2px;height:40px;background:#dddddd;"></div>
<div class="abs" style="left:694px;top:2px;width:2px;height:40px;background:#dddddd;"></div>
<div class="abs" style="left:824px;top:2px;width:2px;height:40px;background:#dddddd;"></div>
<div class="abs" style="left:954px;top:2px;width:2px;height:40px;background:#dddddd;"></div>
<div class="abs" style="left:1084px;top:2px;width:2px;height:40px;background:#dddddd;"></div>
<div class="abs" style="left:1214px;top:2px;width:2px;height:40px;background:#dddddd;"></div>
<div class="abs" style="left:1344px;top:2px;width:2px;height:40px;background:#dddddd;"></div>
<div class="abs" style="left:1474px;top:2px;width:2px;height:40px;background:#dddddd;"></div>
<div class="abs" style="left:1604px;top:2px;width:2px;height:40px;background:#dddddd;"></div>
<div class="abs" style="left:0px;top:42px;width:1568px;height:1.7px;background:#bcbcbc;"></div>
<div class="abs" style="left:44px;top:0px;width:2px;height:1140px;background:#bebebe;"></div>
<div class="abs" style="left:46px;top:43.6px;width:1038px;height:30px;background:#4674ba;"></div>
<div class="abs" style="left:46px;top:72px;width:1039px;height:2px;background:#426fb7;"></div>
<div class="abs" style="left:46px;top:102px;width:1039px;height:2px;background:#426fb7;"></div>
<div class="abs" style="left:46px;top:132px;width:1039px;height:2px;background:#426fb7;"></div>
<div class="abs" style="left:46px;top:162px;width:1039px;height:2px;background:#426fb7;"></div>
<div class="abs" style="left:46px;top:192px;width:1039px;height:2px;background:#426fb7;"></div>
<div class="abs" style="left:46px;top:222px;width:1039px;height:2px;background:#426fb7;"></div>
<div class="abs" style="left:46px;top:252px;width:1039px;height:2px;background:#426fb7;"></div>
<div class="abs" style="left:46px;top:282px;width:1039px;height:2px;background:#426fb7;"></div>
<div class="abs" style="left:46px;top:312px;width:1039px;height:2px;background:#426fb7;"></div>
<div class="abs" style="left:46px;top:342px;width:1039px;height:2px;background:#426fb7;"></div>
<div class="abs" style="left:46px;top:372px;width:1039px;height:2px;background:#426fb7;"></div>
<div class="abs" style="left:46px;top:402px;width:1039px;height:2px;background:#426fb7;"></div>
<div class="abs" style="left:46px;top:432px;width:1039px;height:2px;background:#426fb7;"></div>
<div class="abs" style="left:46px;top:462px;width:1039px;height:2px;background:#426fb7;"></div>
<div class="abs" style="left:46px;top:492px;width:1039px;height:2px;background:#426fb7;"></div>
<div class="abs" style="left:46px;top:522px;width:1039px;height:2px;background:#426fb7;"></div>
<div class="abs" style="left:46px;top:552px;width:1039px;height:2px;background:#426fb7;"></div>
<div class="abs" style="left:46px;top:582px;width:1039px;height:2px;background:#426fb7;"></div>
<div class="abs" style="left:46px;top:612px;width:1039px;height:2px;background:#426fb7;"></div>
<div class="abs" style="left:46px;top:642px;width:1039px;height:2px;background:#426fb7;"></div>
<div class="abs" style="left:46px;top:672px;width:1039px;height:2px;background:#426fb7;"></div>
<div class="abs" style="left:46px;top:702px;width:1039px;height:2px;background:#426fb7;"></div>
<div class="abs" style="left:46px;top:732px;width:1039px;height:2px;background:#426fb7;"></div>
<div class="abs" style="left:46px;top:762px;width:1039px;height:2px;background:#426fb7;"></div>
<div class="abs" style="left:46px;top:792px;width:1039px;height:2px;background:#426fb7;"></div>
<div class="abs" style="left:46px;top:822px;width:1039px;height:2px;background:#426fb7;"></div>
<div class="abs" style="left:46px;top:852px;width:1039px;height:2px;background:#426fb7;"></div>
<div class="abs" style="left:46px;top:882px;width:1039px;height:2px;background:#426fb7;"></div>
<div class="abs" style="left:46px;top:912px;width:1039px;height:2px;background:#426fb7;"></div>
<div class="abs" style="left:46px;top:942px;width:1039px;height:2px;background:#426fb7;"></div>
<div class="abs" style="left:46px;top:972px;width:1039px;height:2px;background:#426fb7;"></div>
<div class="abs" style="left:46px;top:1002px;width:1039px;height:2px;background:#426fb7;"></div>
<div class="abs" style="left:46px;top:1032px;width:1039px;height:2px;background:#426fb7;"></div>
<div class="abs" style="left:46px;top:1062px;width:1039px;height:2px;background:#426fb7;"></div>
<div class="abs" style="left:46px;top:1092px;width:1039px;height:2px;background:#426fb7;"></div>
<div class="abs" style="left:46px;top:1122px;width:1039px;height:2px;background:#426fb7;"></div>
<div class="abs" style="left:46px;top:1152px;width:1039px;height:2px;background:#426fb7;"></div>
<div class="abs" style="left:1084px;top:43px;width:2px;height:1100px;background:#426fb7;"></div>
<div class="abs" style="left:1215px;top:39.6px;width:131px;height:4.4px;background:#1a6b3c;"></div>
<div class="abs" style="left:42px;top:432.6px;width:4px;height:30.8px;background:#1a6b3c;"></div>
<svg width="46" height="44" viewBox="0 394 46 44" style="left:0;top:0"><path d="M39.8 402 V432 H10.2 Z" fill="#d9d9d9"/></svg>
<span class="t" style="left:103.50px;top:11.80px;font-size:19.3px;color:#444;-webkit-text-stroke:.3px #444;">A</span>
<span class="t" style="left:233.50px;top:11.80px;font-size:19.3px;color:#444;-webkit-text-stroke:.3px #444;">B</span>
<span class="t" style="left:363.00px;top:11.80px;font-size:19.3px;color:#444;-webkit-text-stroke:.3px #444;">C</span>
<span class="t" style="left:493.00px;top:11.80px;font-size:19.3px;color:#444;-webkit-text-stroke:.3px #444;">D</span>
<span class="t" style="left:623.00px;top:11.80px;font-size:19.3px;color:#444;-webkit-text-stroke:.3px #444;">E</span>
<span class="t" style="left:754.00px;top:11.80px;font-size:19.3px;color:#444;-webkit-text-stroke:.3px #444;">F</span>
<span class="t" style="left:883.00px;top:11.80px;font-size:19.3px;color:#444;-webkit-text-stroke:.3px #444;">G</span>
<span class="t" style="left:1013.00px;top:11.80px;font-size:19.3px;color:#444;-webkit-text-stroke:.3px #444;">H</span>
<span class="t" style="left:1147.50px;top:11.80px;font-size:19.3px;color:#444;-webkit-text-stroke:.3px #444;">I</span>
<span class="t" style="left:1275.50px;top:11.80px;font-size:19.3px;color:#1a6b3c;-webkit-text-stroke:.3px #1a6b3c;">J</span>
<span class="t" style="left:1403.00px;top:11.80px;font-size:19.3px;color:#444;-webkit-text-stroke:.3px #444;">K</span>
<span class="t" style="left:1534.00px;top:11.80px;font-size:19.3px;color:#444;-webkit-text-stroke:.3px #444;">L</span>
<span class="t" style="left:15.20px;top:49.60px;font-size:19.2px;font-family:'DejaVu Sans',sans-serif;letter-spacing:-0.300px;color:#444;">1</span>
<span class="t" style="left:15.70px;top:79.60px;font-size:19.2px;font-family:'DejaVu Sans',sans-serif;letter-spacing:-0.300px;color:#444;">2</span>
<span class="t" style="left:15.70px;top:109.60px;font-size:19.2px;font-family:'DejaVu Sans',sans-serif;letter-spacing:-0.300px;color:#444;">3</span>
<span class="t" style="left:15.70px;top:139.60px;font-size:19.2px;font-family:'DejaVu Sans',sans-serif;letter-spacing:-0.300px;color:#444;">4</span>
<span class="t" style="left:15.70px;top:169.60px;font-size:19.2px;font-family:'DejaVu Sans',sans-serif;letter-spacing:-0.300px;color:#444;">5</span>
<span class="t" style="left:15.70px;top:199.60px;font-size:19.2px;font-family:'DejaVu Sans',sans-serif;letter-spacing:-0.300px;color:#444;">6</span>
<span class="t" style="left:15.70px;top:229.60px;font-size:19.2px;font-family:'DejaVu Sans',sans-serif;letter-spacing:-0.300px;color:#444;">7</span>
<span class="t" style="left:15.70px;top:259.60px;font-size:19.2px;font-family:'DejaVu Sans',sans-serif;letter-spacing:-0.300px;color:#444;">8</span>
<span class="t" style="left:15.70px;top:289.60px;font-size:19.2px;font-family:'DejaVu Sans',sans-serif;letter-spacing:-0.300px;color:#444;">9</span>
<span class="t" style="left:9.25px;top:319.60px;font-size:19.2px;font-family:'DejaVu Sans',sans-serif;letter-spacing:-0.300px;color:#444;">10</span>
<span class="t" style="left:9.25px;top:349.60px;font-size:19.2px;font-family:'DejaVu Sans',sans-serif;letter-spacing:-0.300px;color:#444;">11</span>
<span class="t" style="left:9.25px;top:379.60px;font-size:19.2px;font-family:'DejaVu Sans',sans-serif;letter-spacing:-0.300px;color:#444;">12</span>
<span class="t" style="left:9.25px;top:409.60px;font-size:19.2px;font-family:'DejaVu Sans',sans-serif;letter-spacing:-0.300px;color:#444;">13</span>
<span class="t" style="left:8.75px;top:439.60px;font-size:19.2px;font-family:'DejaVu Sans',sans-serif;letter-spacing:-0.300px;color:#1a6b3c;">14</span>
<span class="t" style="left:9.25px;top:469.60px;font-size:19.2px;font-family:'DejaVu Sans',sans-serif;letter-spacing:-0.300px;color:#444;">15</span>
<span class="t" style="left:9.25px;top:499.60px;font-size:19.2px;font-family:'DejaVu Sans',sans-serif;letter-spacing:-0.300px;color:#444;">16</span>
<span class="t" style="left:9.25px;top:529.60px;font-size:19.2px;font-family:'DejaVu Sans',sans-serif;letter-spacing:-0.300px;color:#444;">17</span>
<span class="t" style="left:9.25px;top:559.60px;font-size:19.2px;font-family:'DejaVu Sans',sans-serif;letter-spacing:-0.300px;color:#444;">18</span>
<span class="t" style="left:9.25px;top:589.60px;font-size:19.2px;font-family:'DejaVu Sans',sans-serif;letter-spacing:-0.300px;color:#444;">19</span>
<span class="t" style="left:9.75px;top:619.60px;font-size:19.2px;font-family:'DejaVu Sans',sans-serif;letter-spacing:-0.300px;color:#444;">20</span>
<span class="t" style="left:9.75px;top:649.60px;font-size:19.2px;font-family:'DejaVu Sans',sans-serif;letter-spacing:-0.300px;color:#444;">21</span>
<span class="t" style="left:9.75px;top:679.60px;font-size:19.2px;font-family:'DejaVu Sans',sans-serif;letter-spacing:-0.300px;color:#444;">22</span>
<span class="t" style="left:9.75px;top:709.60px;font-size:19.2px;font-family:'DejaVu Sans',sans-serif;letter-spacing:-0.300px;color:#444;">23</span>
<span class="t" style="left:9.25px;top:739.60px;font-size:19.2px;font-family:'DejaVu Sans',sans-serif;letter-spacing:-0.300px;color:#444;">24</span>
<span class="t" style="left:9.75px;top:769.60px;font-size:19.2px;font-family:'DejaVu Sans',sans-serif;letter-spacing:-0.300px;color:#444;">25</span>
<span class="t" style="left:9.75px;top:799.60px;font-size:19.2px;font-family:'DejaVu Sans',sans-serif;letter-spacing:-0.300px;color:#444;">26</span>
<span class="t" style="left:9.75px;top:829.60px;font-size:19.2px;font-family:'DejaVu Sans',sans-serif;letter-spacing:-0.300px;color:#444;">27</span>
<span class="t" style="left:9.75px;top:859.60px;font-size:19.2px;font-family:'DejaVu Sans',sans-serif;letter-spacing:-0.300px;color:#444;">28</span>
<span class="t" style="left:9.75px;top:889.60px;font-size:19.2px;font-family:'DejaVu Sans',sans-serif;letter-spacing:-0.300px;color:#444;">29</span>
<span class="t" style="left:9.75px;top:919.60px;font-size:19.2px;font-family:'DejaVu Sans',sans-serif;letter-spacing:-0.300px;color:#444;">30</span>
<span class="t" style="left:9.75px;top:949.60px;font-size:19.2px;font-family:'DejaVu Sans',sans-serif;letter-spacing:-0.300px;color:#444;">31</span>
<span class="t" style="left:9.75px;top:979.60px;font-size:19.2px;font-family:'DejaVu Sans',sans-serif;letter-spacing:-0.300px;color:#444;">32</span>
<span class="t" style="left:9.75px;top:1009.60px;font-size:19.2px;font-family:'DejaVu Sans',sans-serif;letter-spacing:-0.300px;color:#444;">33</span>
<span class="t" style="left:9.25px;top:1039.60px;font-size:19.2px;font-family:'DejaVu Sans',sans-serif;letter-spacing:-0.300px;color:#444;">34</span>
<span class="t" style="left:9.75px;top:1069.60px;font-size:19.2px;font-family:'DejaVu Sans',sans-serif;letter-spacing:-0.300px;color:#444;">35</span>
<span class="t" style="left:9.75px;top:1099.60px;font-size:19.2px;font-family:'DejaVu Sans',sans-serif;letter-spacing:-0.300px;color:#444;">36</span>
<span class="t" style="left:9.75px;top:1129.60px;font-size:19.2px;font-family:'DejaVu Sans',sans-serif;letter-spacing:-0.300px;color:#444;">37</span>
<span class="t" style="left:50.00px;top:50.20px;font-size:19.6px;font-weight:bold;letter-spacing:-0.742px;color:#fff;-webkit-text-stroke:.3px #fff;">Blank_3</span>
<div class="fb" style="left:145.2px;top:44px"></div>
<span class="t" style="left:180.00px;top:50.20px;font-size:19.6px;font-weight:bold;letter-spacing:-0.742px;color:#fff;-webkit-text-stroke:.3px #fff;">Blank_4</span>
<div class="fb" style="left:275.2px;top:44px"></div>
<span class="t" style="left:310.30px;top:50.20px;font-size:19.6px;font-weight:bold;letter-spacing:-0.963px;color:#fff;-webkit-text-stroke:.3px #fff;">QC_1</span>
<div class="fb" style="left:405.2px;top:44px"></div>
<span class="t" style="left:440.30px;top:50.20px;font-size:19.6px;font-weight:bold;letter-spacing:-0.963px;color:#fff;-webkit-text-stroke:.3px #fff;">QC_2</span>
<div class="fb" style="left:535.2px;top:44px"></div>
<span class="t" style="left:569.30px;top:50.20px;font-size:19.6px;font-weight:bold;letter-spacing:-1.001px;color:#fff;-webkit-text-stroke:.3px #fff;">PS4P1</span>
<div class="fb" style="left:665.2px;top:44px"></div>
<span class="t" style="left:699.30px;top:50.20px;font-size:19.6px;font-weight:bold;letter-spacing:-1.001px;color:#fff;-webkit-text-stroke:.3px #fff;">PS4P2</span>
<div class="fb" style="left:795.2px;top:44px"></div>
<span class="t" style="left:829.30px;top:50.20px;font-size:19.6px;font-weight:bold;letter-spacing:-1.001px;color:#fff;-webkit-text-stroke:.3px #fff;">PS4P3</span>
<div class="fb" style="left:925.2px;top:44px"></div>
<span class="t" style="left:959.30px;top:50.20px;font-size:19.6px;font-weight:bold;letter-spacing:-1.001px;color:#fff;-webkit-text-stroke:.3px #fff;">PS4P4</span>
<div class="fb" style="left:1055.2px;top:44px"></div>
<span class="t" style="left:315.94px;top:79.60px;font-size:19.4px;font-family:'DejaVu Sans',sans-serif;letter-spacing:-0.400px;color:#000;-webkit-text-stroke:.25px #000;">1857924.75</span>
<span class="t" style="left:444.94px;top:79.60px;font-size:19.4px;font-family:'DejaVu Sans',sans-serif;letter-spacing:-0.400px;color:#000;-webkit-text-stroke:.25px #000;">1037763.84</span>
<span class="t" style="left:574.94px;top:79.60px;font-size:19.4px;font-family:'DejaVu Sans',sans-serif;letter-spacing:-0.400px;color:#000;-webkit-text-stroke:.25px #000;">1494436.06</span>
<span class="t" style="left:704.94px;top:79.60px;font-size:19.4px;font-family:'DejaVu Sans',sans-serif;letter-spacing:-0.400px;color:#000;-webkit-text-stroke:.25px #000;">3496912.06</span>
<span class="t" style="left:835.94px;top:79.60px;font-size:19.4px;font-family:'DejaVu Sans',sans-serif;letter-spacing:-0.400px;color:#000;-webkit-text-stroke:.25px #000;">1959178.81</span>
<span class="t" style="left:965.94px;top:79.60px;font-size:19.4px;font-family:'DejaVu Sans',sans-serif;letter-spacing:-0.400px;color:#000;-webkit-text-stroke:.25px #000;">1005418.77</span>
<span class="t" style="left:315.94px;top:109.60px;font-size:19.4px;font-family:'DejaVu Sans',sans-serif;letter-spacing:-0.400px;color:#000;-webkit-text-stroke:.25px #000;">2821550.17</span>
<span class="t" style="left:445.94px;top:109.60px;font-size:19.4px;font-family:'DejaVu Sans',sans-serif;letter-spacing:-0.400px;color:#000;-webkit-text-stroke:.25px #000;">1304875.35</span>
<span class="t" style="left:575.94px;top:109.60px;font-size:19.4px;font-family:'DejaVu Sans',sans-serif;letter-spacing:-0.400px;color:#000;-webkit-text-stroke:.25px #000;">2471336.15</span>
<span class="t" style="left:705.94px;top:109.60px;font-size:19.4px;font-family:'DejaVu Sans',sans-serif;letter-spacing:-0.400px;color:#000;-webkit-text-stroke:.25px #000;">3333582.75</span>
<span class="t" style="left:835.94px;top:109.60px;font-size:19.4px;font-family:'DejaVu Sans',sans-serif;letter-spacing:-0.400px;color:#000;-webkit-text-stroke:.25px #000;">2734243.82</span>
<span class="t" style="left:964.94px;top:109.60px;font-size:19.4px;font-family:'DejaVu Sans',sans-serif;letter-spacing:-0.400px;color:#000;-webkit-text-stroke:.25px #000;">3361452.28</span>
<span class="t" style="left:315.94px;top:139.60px;font-size:19.4px;font-family:'DejaVu Sans',sans-serif;letter-spacing:-0.400px;color:#000;-webkit-text-stroke:.25px #000;">410387.623</span>
<span class="t" style="left:445.94px;top:139.60px;font-size:19.4px;font-family:'DejaVu Sans',sans-serif;letter-spacing:-0.400px;color:#000;-webkit-text-stroke:.25px #000;">273687.811</span>
<span class="t" style="left:575.94px;top:139.60px;font-size:19.4px;font-family:'DejaVu Sans',sans-serif;letter-spacing:-0.400px;color:#000;-webkit-text-stroke:.25px #000;">288590.205</span>
<span class="t" style="left:705.94px;top:139.60px;font-size:19.4px;font-family:'DejaVu Sans',sans-serif;letter-spacing:-0.400px;color:#000;-webkit-text-stroke:.25px #000;">137297.493</span>
<span class="t" style="left:965.94px;top:139.60px;font-size:19.4px;font-family:'DejaVu Sans',sans-serif;letter-spacing:-0.400px;color:#000;-webkit-text-stroke:.25px #000;">271318.305</span>
<span class="t" style="left:705.94px;top:169.60px;font-size:19.4px;font-family:'DejaVu Sans',sans-serif;letter-spacing:-0.400px;color:#000;-webkit-text-stroke:.25px #000;">5059068.12</span>
<span class="t" style="left:835.94px;top:169.60px;font-size:19.4px;font-family:'DejaVu Sans',sans-serif;letter-spacing:-0.400px;color:#000;-webkit-text-stroke:.25px #000;">5147421.59</span>
<span class="t" style="left:315.94px;top:199.60px;font-size:19.4px;font-family:'DejaVu Sans',sans-serif;letter-spacing:-0.400px;color:#000;-webkit-text-stroke:.25px #000;">8730104.77</span>
<span class="t" style="left:457.88px;top:199.60px;font-size:19.4px;font-family:'DejaVu Sans',sans-serif;letter-spacing:-0.400px;color:#000;-webkit-text-stroke:.25px #000;">4105598.5</span>
<span class="t" style="left:575.94px;top:199.60px;font-size:19.4px;font-family:'DejaVu Sans',sans-serif;letter-spacing:-0.400px;color:#000;-webkit-text-stroke:.25px #000;">5141073.21</span>
<span class="t" style="left:705.94px;top:199.60px;font-size:19.4px;font-family:'DejaVu Sans',sans-serif;letter-spacing:-0.400px;color:#000;-webkit-text-stroke:.25px #000;">8424315.63</span>
<span class="t" style="left:847.88px;top:199.60px;font-size:19.4px;font-family:'DejaVu Sans',sans-serif;letter-spacing:-0.400px;color:#000;-webkit-text-stroke:.25px #000;">7896633.3</span>
<span class="t" style="left:965.94px;top:199.60px;font-size:19.4px;font-family:'DejaVu Sans',sans-serif;letter-spacing:-0.400px;color:#000;-webkit-text-stroke:.25px #000;">6441448.99</span>
<span class="t" style="left:66.88px;top:229.60px;font-size:19.4px;font-family:'DejaVu Sans',sans-serif;letter-spacing:-0.400px;color:#000;-webkit-text-stroke:.25px #000;">3761892.6</span>
<span class="t" style="left:185.94px;top:229.60px;font-size:19.4px;font-family:'DejaVu Sans',sans-serif;letter-spacing:-0.400px;color:#000;-webkit-text-stroke:.25px #000;">2572593.39</span>
<span class="t" style="left:445.94px;top:229.60px;font-size:19.4px;font-family:'DejaVu Sans',sans-serif;letter-spacing:-0.400px;color:#000;-webkit-text-stroke:.25px #000;">3662819.05</span>
<span class="t" style="left:575.94px;top:229.60px;font-size:19.4px;font-family:'DejaVu Sans',sans-serif;letter-spacing:-0.400px;color:#000;-webkit-text-stroke:.25px #000;">5700534.77</span>
<span class="t" style="left:705.94px;top:229.60px;font-size:19.4px;font-family:'DejaVu Sans',sans-serif;letter-spacing:-0.400px;color:#000;-webkit-text-stroke:.25px #000;">4600172.35</span>
<span class="t" style="left:835.94px;top:229.60px;font-size:19.4px;font-family:'DejaVu Sans',sans-serif;letter-spacing:-0.400px;color:#000;-webkit-text-stroke:.25px #000;">5557014.59</span>
<span class="t" style="left:964.94px;top:229.60px;font-size:19.4px;font-family:'DejaVu Sans',sans-serif;letter-spacing:-0.400px;color:#000;-webkit-text-stroke:.25px #000;">4433034.18</span>
<span class="t" style="left:315.94px;top:259.60px;font-size:19.4px;font-family:'DejaVu Sans',sans-serif;letter-spacing:-0.400px;color:#000;-webkit-text-stroke:.25px #000;">3688690.61</span>
<span class="t" style="left:445.94px;top:259.60px;font-size:19.4px;font-family:'DejaVu Sans',sans-serif;letter-spacing:-0.400px;color:#000;-webkit-text-stroke:.25px #000;">2892719.55</span>
<span class="t" style="left:575.94px;top:259.60px;font-size:19.4px;font-family:'DejaVu Sans',sans-serif;letter-spacing:-0.400px;color:#000;-webkit-text-stroke:.25px #000;">1401632.69</span>
<span class="t" style="left:705.94px;top:259.60px;font-size:19.4px;font-family:'DejaVu Sans',sans-serif;letter-spacing:-0.400px;color:#000;-webkit-text-stroke:.25px #000;">4055989.49</span>
<span class="t" style="left:835.94px;top:259.60px;font-size:19.4px;font-family:'DejaVu Sans',sans-serif;letter-spacing:-0.400px;color:#000;-webkit-text-stroke:.25px #000;">1577496.32</span>
<span class="t" style="left:965.94px;top:259.60px;font-size:19.4px;font-family:'DejaVu Sans',sans-serif;letter-spacing:-0.400px;color:#000;-webkit-text-stroke:.25px #000;">3668817.47</span>
<span class="t" style="left:445.94px;top:289.60px;font-size:19.4px;font-family:'DejaVu Sans',sans-serif;letter-spacing:-0.400px;color:#000;-webkit-text-stroke:.25px #000;">3131157.72</span>
<span class="t" style="left:834.94px;top:289.60px;font-size:19.4px;font-family:'DejaVu Sans',sans-serif;letter-spacing:-0.400px;color:#000;-webkit-text-stroke:.25px #000;">3643606.36</span>
<span class="t" style="left:315.94px;top:319.60px;font-size:19.4px;font-family:'DejaVu Sans',sans-serif;letter-spacing:-0.400px;color:#000;-webkit-text-stroke:.25px #000;">589957.045</span>
<span class="t" style="left:445.94px;top:319.60px;font-size:19.4px;font-family:'DejaVu Sans',sans-serif;letter-spacing:-0.400px;color:#000;-webkit-text-stroke:.25px #000;">408610.803</span>
<span class="t" style="left:705.94px;top:319.60px;font-size:19.4px;font-family:'DejaVu Sans',sans-serif;letter-spacing:-0.400px;color:#000;-webkit-text-stroke:.25px #000;">276913.407</span>
<span class="t" style="left:834.94px;top:319.60px;font-size:19.4px;font-family:'DejaVu Sans',sans-serif;letter-spacing:-0.400px;color:#000;-webkit-text-stroke:.25px #000;">304611.468</span>
<span class="t" style="left:965.94px;top:319.60px;font-size:19.4px;font-family:'DejaVu Sans',sans-serif;letter-spacing:-0.400px;color:#000;-webkit-text-stroke:.25px #000;">450460.303</span>
<span class="t" style="left:55.94px;top:349.60px;font-size:19.4px;font-family:'DejaVu Sans',sans-serif;letter-spacing:-0.400px;color:#000;-webkit-text-stroke:.25px #000;">249352.555</span>
<span class="t" style="left:196.88px;top:349.60px;font-size:19.4px;font-family:'DejaVu Sans',sans-serif;letter-spacing:-0.400px;color:#000;-webkit-text-stroke:.25px #000;">131374.46</span>
<span class="t" style="left:315.94px;top:349.60px;font-size:19.4px;font-family:'DejaVu Sans',sans-serif;letter-spacing:-0.400px;color:#000;-webkit-text-stroke:.25px #000;">248764.073</span>
<span class="t" style="left:445.94px;top:349.60px;font-size:19.4px;font-family:'DejaVu Sans',sans-serif;letter-spacing:-0.400px;color:#000;-webkit-text-stroke:.25px #000;">208789.403</span>
<span class="t" style="left:587.88px;top:349.60px;font-size:19.4px;font-family:'DejaVu Sans',sans-serif;letter-spacing:-0.400px;color:#000;-webkit-text-stroke:.25px #000;">423991.79</span>
<span class="t" style="left:704.94px;top:349.60px;font-size:19.4px;font-family:'DejaVu Sans',sans-serif;letter-spacing:-0.400px;color:#000;-webkit-text-stroke:.25px #000;">449021.634</span>
<span class="t" style="left:835.94px;top:349.60px;font-size:19.4px;font-family:'DejaVu Sans',sans-serif;letter-spacing:-0.400px;color:#000;-webkit-text-stroke:.25px #000;">357037.739</span>
<span class="t" style="left:965.94px;top:349.60px;font-size:19.4px;font-family:'DejaVu Sans',sans-serif;letter-spacing:-0.400px;color:#000;-webkit-text-stroke:.25px #000;">304748.812</span>
<span class="t" style="left:457.88px;top:379.60px;font-size:19.4px;font-family:'DejaVu Sans',sans-serif;letter-spacing:-0.400px;color:#000;-webkit-text-stroke:.25px #000;">5776921.1</span>
<span class="t" style="left:315.94px;top:409.60px;font-size:19.4px;font-family:'DejaVu Sans',sans-serif;letter-spacing:-0.400px;color:#000;-webkit-text-stroke:.25px #000;">2816826.61</span>
<span class="t" style="left:445.94px;top:409.60px;font-size:19.4px;font-family:'DejaVu Sans',sans-serif;letter-spacing:-0.400px;color:#000;-webkit-text-stroke:.25px #000;">237776.305</span>
<span class="t" style="left:575.94px;top:409.60px;font-size:19.4px;font-family:'DejaVu Sans',sans-serif;letter-spacing:-0.400px;color:#000;-webkit-text-stroke:.25px #000;">439981.613</span>
<span class="t" style="left:705.94px;top:409.60px;font-size:19.4px;font-family:'DejaVu Sans',sans-serif;letter-spacing:-0.400px;color:#000;-webkit-text-stroke:.25px #000;">510661.761</span>
<span class="t" style="left:834.94px;top:409.60px;font-size:19.4px;font-family:'DejaVu Sans',sans-serif;letter-spacing:-0.400px;color:#000;-webkit-text-stroke:.25px #000;">415109.544</span>
<span class="t" style="left:462.64px;top:439.60px;font-size:19.4px;font-family:'DejaVu Sans',sans-serif;letter-spacing:-0.400px;color:#000;-webkit-text-stroke:.25px #000;">11028014</span>
<span class="t" style="left:315.94px;top:469.60px;font-size:19.4px;font-family:'DejaVu Sans',sans-serif;letter-spacing:-0.400px;color:#000;-webkit-text-stroke:.25px #000;">1367524.87</span>
<span class="t" style="left:445.94px;top:469.60px;font-size:19.4px;font-family:'DejaVu Sans',sans-serif;letter-spacing:-0.400px;color:#000;-webkit-text-stroke:.25px #000;">1044288.37</span>
<span class="t" style="left:574.94px;top:469.60px;font-size:19.4px;font-family:'DejaVu Sans',sans-serif;letter-spacing:-0.400px;color:#000;-webkit-text-stroke:.25px #000;">1786016.06</span>
<span class="t" style="left:716.88px;top:469.60px;font-size:19.4px;font-family:'DejaVu Sans',sans-serif;letter-spacing:-0.400px;color:#000;-webkit-text-stroke:.25px #000;">1878777.4</span>
<span class="t" style="left:835.94px;top:469.60px;font-size:19.4px;font-family:'DejaVu Sans',sans-serif;letter-spacing:-0.400px;color:#000;-webkit-text-stroke:.25px #000;">1025039.91</span>
<span class="t" style="left:965.94px;top:469.60px;font-size:19.4px;font-family:'DejaVu Sans',sans-serif;letter-spacing:-0.400px;color:#000;-webkit-text-stroke:.25px #000;">1231166.37</span>
<span class="t" style="left:315.94px;top:499.60px;font-size:19.4px;font-family:'DejaVu Sans',sans-serif;letter-spacing:-0.400px;color:#000;-webkit-text-stroke:.25px #000;">107442.721</span>
<span class="t" style="left:834.94px;top:499.60px;font-size:19.4px;font-family:'DejaVu Sans',sans-serif;letter-spacing:-0.400px;color:#000;-webkit-text-stroke:.25px #000;">60286.3034</span>
<span class="t" style="left:965.94px;top:499.60px;font-size:19.4px;font-family:'DejaVu Sans',sans-serif;letter-spacing:-0.400px;color:#000;-webkit-text-stroke:.25px #000;">151034.219</span>
<span class="t" style="left:575.94px;top:529.60px;font-size:19.4px;font-family:'DejaVu Sans',sans-serif;letter-spacing:-0.400px;color:#000;-webkit-text-stroke:.25px #000;">383375.653</span>
<span class="t" style="left:704.94px;top:529.60px;font-size:19.4px;font-family:'DejaVu Sans',sans-serif;letter-spacing:-0.400px;color:#000;-webkit-text-stroke:.25px #000;">804807.294</span>
<span class="t" style="left:835.94px;top:529.60px;font-size:19.4px;font-family:'DejaVu Sans',sans-serif;letter-spacing:-0.400px;color:#000;-webkit-text-stroke:.25px #000;">551792.659</span>
<span class="t" style="left:965.94px;top:529.60px;font-size:19.4px;font-family:'DejaVu Sans',sans-serif;letter-spacing:-0.400px;color:#000;-webkit-text-stroke:.25px #000;">433957.529</span>
<span class="t" style="left:55.94px;top:559.60px;font-size:19.4px;font-family:'DejaVu Sans',sans-serif;letter-spacing:-0.400px;color:#000;-webkit-text-stroke:.25px #000;">3579848.97</span>
<span class="t" style="left:315.94px;top:559.60px;font-size:19.4px;font-family:'DejaVu Sans',sans-serif;letter-spacing:-0.400px;color:#000;-webkit-text-stroke:.25px #000;">8958486.59</span>
<span class="t" style="left:444.94px;top:559.60px;font-size:19.4px;font-family:'DejaVu Sans',sans-serif;letter-spacing:-0.400px;color:#000;-webkit-text-stroke:.25px #000;">4426960.28</span>
<span class="t" style="left:587.88px;top:559.60px;font-size:19.4px;font-family:'DejaVu Sans',sans-serif;letter-spacing:-0.400px;color:#000;-webkit-text-stroke:.25px #000;">5831971.2</span>
<span class="t" style="left:705.94px;top:559.60px;font-size:19.4px;font-family:'DejaVu Sans',sans-serif;letter-spacing:-0.400px;color:#000;-webkit-text-stroke:.25px #000;">12377184.9</span>
<span class="t" style="left:835.94px;top:559.60px;font-size:19.4px;font-family:'DejaVu Sans',sans-serif;letter-spacing:-0.400px;color:#000;-webkit-text-stroke:.25px #000;">4782366.89</span>
<span class="t" style="left:976.88px;top:559.60px;font-size:19.4px;font-family:'DejaVu Sans',sans-serif;letter-spacing:-0.400px;color:#000;-webkit-text-stroke:.25px #000;">4468170.4</span>
<span class="t" style="left:315.94px;top:589.60px;font-size:19.4px;font-family:'DejaVu Sans',sans-serif;letter-spacing:-0.400px;color:#000;-webkit-text-stroke:.25px #000;">37708425.9</span>
<span class="t" style="left:445.94px;top:589.60px;font-size:19.4px;font-family:'DejaVu Sans',sans-serif;letter-spacing:-0.400px;color:#000;-webkit-text-stroke:.25px #000;">22205409.1</span>
<span class="t" style="left:965.94px;top:589.60px;font-size:19.4px;font-family:'DejaVu Sans',sans-serif;letter-spacing:-0.400px;color:#000;-webkit-text-stroke:.25px #000;">24935933.9</span>
<span class="t" style="left:575.94px;top:619.60px;font-size:19.4px;font-family:'DejaVu Sans',sans-serif;letter-spacing:-0.400px;color:#000;-webkit-text-stroke:.25px #000;">396424.851</span>
<span class="t" style="left:704.94px;top:619.60px;font-size:19.4px;font-family:'DejaVu Sans',sans-serif;letter-spacing:-0.400px;color:#000;-webkit-text-stroke:.25px #000;">282848.386</span>
<span class="t" style="left:965.94px;top:619.60px;font-size:19.4px;font-family:'DejaVu Sans',sans-serif;letter-spacing:-0.400px;color:#000;-webkit-text-stroke:.25px #000;">74703.3493</span>
<span class="t" style="left:835.94px;top:649.60px;font-size:19.4px;font-family:'DejaVu Sans',sans-serif;letter-spacing:-0.400px;color:#000;-webkit-text-stroke:.25px #000;">74639.7505</span>
<span class="t" style="left:964.94px;top:649.60px;font-size:19.4px;font-family:'DejaVu Sans',sans-serif;letter-spacing:-0.400px;color:#000;-webkit-text-stroke:.25px #000;">48255.2554</span>
<span class="t" style="left:67.88px;top:679.60px;font-size:19.4px;font-family:'DejaVu Sans',sans-serif;letter-spacing:-0.400px;color:#000;-webkit-text-stroke:.25px #000;">6060235.1</span>
<span class="t" style="left:184.94px;top:679.60px;font-size:19.4px;font-family:'DejaVu Sans',sans-serif;letter-spacing:-0.400px;color:#000;-webkit-text-stroke:.25px #000;">6762163.24</span>
<span class="t" style="left:314.94px;top:679.60px;font-size:19.4px;font-family:'DejaVu Sans',sans-serif;letter-spacing:-0.400px;color:#000;-webkit-text-stroke:.25px #000;">4950188.58</span>
<span class="t" style="left:444.94px;top:679.60px;font-size:19.4px;font-family:'DejaVu Sans',sans-serif;letter-spacing:-0.400px;color:#000;-webkit-text-stroke:.25px #000;">3757431.76</span>
<span class="t" style="left:575.94px;top:679.60px;font-size:19.4px;font-family:'DejaVu Sans',sans-serif;letter-spacing:-0.400px;color:#000;-webkit-text-stroke:.25px #000;">8051924.83</span>
<span class="t" style="left:705.94px;top:679.60px;font-size:19.4px;font-family:'DejaVu Sans',sans-serif;letter-spacing:-0.400px;color:#000;-webkit-text-stroke:.25px #000;">5163606.85</span>
<span class="t" style="left:834.94px;top:679.60px;font-size:19.4px;font-family:'DejaVu Sans',sans-serif;letter-spacing:-0.400px;color:#000;-webkit-text-stroke:.25px #000;">5008614.16</span>
<span class="t" style="left:994.58px;top:679.60px;font-size:19.4px;font-family:'DejaVu Sans',sans-serif;letter-spacing:-0.400px;color:#000;-webkit-text-stroke:.25px #000;">4222670</span>
<span class="t" style="left:197.88px;top:709.60px;font-size:19.4px;font-family:'DejaVu Sans',sans-serif;letter-spacing:-0.400px;color:#000;-webkit-text-stroke:.25px #000;">304137.75</span>
<span class="t" style="left:315.94px;top:709.60px;font-size:19.4px;font-family:'DejaVu Sans',sans-serif;letter-spacing:-0.400px;color:#000;-webkit-text-stroke:.25px #000;">191665.471</span>
<span class="t" style="left:444.94px;top:709.60px;font-size:19.4px;font-family:'DejaVu Sans',sans-serif;letter-spacing:-0.400px;color:#000;-webkit-text-stroke:.25px #000;">216783.648</span>
<span class="t" style="left:574.94px;top:709.60px;font-size:19.4px;font-family:'DejaVu Sans',sans-serif;letter-spacing:-0.400px;color:#000;-webkit-text-stroke:.25px #000;">583289.296</span>
<span class="t" style="left:705.94px;top:709.60px;font-size:19.4px;font-family:'DejaVu Sans',sans-serif;letter-spacing:-0.400px;color:#000;-webkit-text-stroke:.25px #000;">369012.809</span>
<span class="t" style="left:834.94px;top:709.60px;font-size:19.4px;font-family:'DejaVu Sans',sans-serif;letter-spacing:-0.400px;color:#000;-webkit-text-stroke:.25px #000;">299427.254</span>
<span class="t" style="left:965.94px;top:709.60px;font-size:19.4px;font-family:'DejaVu Sans',sans-serif;letter-spacing:-0.400px;color:#000;-webkit-text-stroke:.25px #000;">235245.641</span>
<span class="t" style="left:55.94px;top:739.60px;font-size:19.4px;font-family:'DejaVu Sans',sans-serif;letter-spacing:-0.400px;color:#000;-webkit-text-stroke:.25px #000;">1814932.62</span>
<span class="t" style="left:185.94px;top:739.60px;font-size:19.4px;font-family:'DejaVu Sans',sans-serif;letter-spacing:-0.400px;color:#000;-webkit-text-stroke:.25px #000;">2226847.95</span>
<span class="t" style="left:315.94px;top:739.60px;font-size:19.4px;font-family:'DejaVu Sans',sans-serif;letter-spacing:-0.400px;color:#000;-webkit-text-stroke:.25px #000;">2508595.47</span>
<span class="t" style="left:444.94px;top:739.60px;font-size:19.4px;font-family:'DejaVu Sans',sans-serif;letter-spacing:-0.400px;color:#000;-webkit-text-stroke:.25px #000;">1672944.46</span>
<span class="t" style="left:574.94px;top:739.60px;font-size:19.4px;font-family:'DejaVu Sans',sans-serif;letter-spacing:-0.400px;color:#000;-webkit-text-stroke:.25px #000;">2429204.36</span>
<span class="t" style="left:705.94px;top:739.60px;font-size:19.4px;font-family:'DejaVu Sans',sans-serif;letter-spacing:-0.400px;color:#000;-webkit-text-stroke:.25px #000;">2250095.87</span>
<span class="t" style="left:835.94px;top:739.60px;font-size:19.4px;font-family:'DejaVu Sans',sans-serif;letter-spacing:-0.400px;color:#000;-webkit-text-stroke:.25px #000;">2360555.21</span>
<span class="t" style="left:977.88px;top:739.60px;font-size:19.4px;font-family:'DejaVu Sans',sans-serif;letter-spacing:-0.400px;color:#000;-webkit-text-stroke:.25px #000;">2154635.9</span>
<span class="t" style="left:315.94px;top:769.60px;font-size:19.4px;font-family:'DejaVu Sans',sans-serif;letter-spacing:-0.400px;color:#000;-webkit-text-stroke:.25px #000;">9902179.35</span>
<span class="t" style="left:705.94px;top:769.60px;font-size:19.4px;font-family:'DejaVu Sans',sans-serif;letter-spacing:-0.400px;color:#000;-webkit-text-stroke:.25px #000;">24617501.5</span>
<span class="t" style="left:852.64px;top:769.60px;font-size:19.4px;font-family:'DejaVu Sans',sans-serif;letter-spacing:-0.400px;color:#000;-webkit-text-stroke:.25px #000;">14362268</span>
<span class="t" style="left:55.94px;top:799.60px;font-size:19.4px;font-family:'DejaVu Sans',sans-serif;letter-spacing:-0.400px;color:#000;-webkit-text-stroke:.25px #000;">1118360.93</span>
<span class="t" style="left:185.94px;top:799.60px;font-size:19.4px;font-family:'DejaVu Sans',sans-serif;letter-spacing:-0.400px;color:#000;-webkit-text-stroke:.25px #000;">703702.589</span>
<span class="t" style="left:315.94px;top:799.60px;font-size:19.4px;font-family:'DejaVu Sans',sans-serif;letter-spacing:-0.400px;color:#000;-webkit-text-stroke:.25px #000;">1420419.35</span>
<span class="t" style="left:445.94px;top:799.60px;font-size:19.4px;font-family:'DejaVu Sans',sans-serif;letter-spacing:-0.400px;color:#000;-webkit-text-stroke:.25px #000;">976930.927</span>
<span class="t" style="left:574.94px;top:799.60px;font-size:19.4px;font-family:'DejaVu Sans',sans-serif;letter-spacing:-0.400px;color:#000;-webkit-text-stroke:.25px #000;">1332420.18</span>
<span class="t" style="left:704.94px;top:799.60px;font-size:19.4px;font-family:'DejaVu Sans',sans-serif;letter-spacing:-0.400px;color:#000;-webkit-text-stroke:.25px #000;">1255815.56</span>
<span class="t" style="left:835.94px;top:799.60px;font-size:19.4px;font-family:'DejaVu Sans',sans-serif;letter-spacing:-0.400px;color:#000;-webkit-text-stroke:.25px #000;">1255619.73</span>
<span class="t" style="left:965.94px;top:799.60px;font-size:19.4px;font-family:'DejaVu Sans',sans-serif;letter-spacing:-0.400px;color:#000;-webkit-text-stroke:.25px #000;">1197708.79</span>
<span class="t" style="left:575.94px;top:829.60px;font-size:19.4px;font-family:'DejaVu Sans',sans-serif;letter-spacing:-0.400px;color:#000;-webkit-text-stroke:.25px #000;">329568.083</span>
<span class="t" style="left:835.94px;top:829.60px;font-size:19.4px;font-family:'DejaVu Sans',sans-serif;letter-spacing:-0.400px;color:#000;-webkit-text-stroke:.25px #000;">291367.765</span>
<span class="t" style="left:315.94px;top:859.60px;font-size:19.4px;font-family:'DejaVu Sans',sans-serif;letter-spacing:-0.400px;color:#000;-webkit-text-stroke:.25px #000;">1404788.51</span>
<span class="t" style="left:445.94px;top:859.60px;font-size:19.4px;font-family:'DejaVu Sans',sans-serif;letter-spacing:-0.400px;color:#000;-webkit-text-stroke:.25px #000;">791568.027</span>
<span class="t" style="left:575.94px;top:859.60px;font-size:19.4px;font-family:'DejaVu Sans',sans-serif;letter-spacing:-0.400px;color:#000;-webkit-text-stroke:.25px #000;">1244587.29</span>
<span class="t" style="left:705.94px;top:859.60px;font-size:19.4px;font-family:'DejaVu Sans',sans-serif;letter-spacing:-0.400px;color:#000;-webkit-text-stroke:.25px #000;">1598055.97</span>
<span class="t" style="left:847.88px;top:859.60px;font-size:19.4px;font-family:'DejaVu Sans',sans-serif;letter-spacing:-0.400px;color:#000;-webkit-text-stroke:.25px #000;">1524461.1</span>
<span class="t" style="left:965.94px;top:859.60px;font-size:19.4px;font-family:'DejaVu Sans',sans-serif;letter-spacing:-0.400px;color:#000;-webkit-text-stroke:.25px #000;">2115318.25</span>
<span class="t" style="left:327.88px;top:889.60px;font-size:19.4px;font-family:'DejaVu Sans',sans-serif;letter-spacing:-0.400px;color:#000;-webkit-text-stroke:.25px #000;">7670884.3</span>
<span class="t" style="left:445.94px;top:889.60px;font-size:19.4px;font-family:'DejaVu Sans',sans-serif;letter-spacing:-0.400px;color:#000;-webkit-text-stroke:.25px #000;">13603545.2</span>
<span class="t" style="left:575.94px;top:889.60px;font-size:19.4px;font-family:'DejaVu Sans',sans-serif;letter-spacing:-0.400px;color:#000;-webkit-text-stroke:.25px #000;">9655159.89</span>
<span class="t" style="left:705.94px;top:889.60px;font-size:19.4px;font-family:'DejaVu Sans',sans-serif;letter-spacing:-0.400px;color:#000;-webkit-text-stroke:.25px #000;">14741760.9</span>
<span class="t" style="left:835.94px;top:889.60px;font-size:19.4px;font-family:'DejaVu Sans',sans-serif;letter-spacing:-0.400px;color:#000;-webkit-text-stroke:.25px #000;">4841004.57</span>
<span class="t" style="left:995.58px;top:889.60px;font-size:19.4px;font-family:'DejaVu Sans',sans-serif;letter-spacing:-0.400px;color:#000;-webkit-text-stroke:.25px #000;">4713372</span>
<span class="t" style="left:315.94px;top:919.60px;font-size:19.4px;font-family:'DejaVu Sans',sans-serif;letter-spacing:-0.400px;color:#000;-webkit-text-stroke:.25px #000;">2795481.01</span>
<span class="t" style="left:314.94px;top:949.60px;font-size:19.4px;font-family:'DejaVu Sans',sans-serif;letter-spacing:-0.400px;color:#000;-webkit-text-stroke:.25px #000;">45835699.4</span>
<span class="t" style="left:444.94px;top:949.60px;font-size:19.4px;font-family:'DejaVu Sans',sans-serif;letter-spacing:-0.400px;color:#000;-webkit-text-stroke:.25px #000;">38075013.4</span>
<span class="t" style="left:574.94px;top:949.60px;font-size:19.4px;font-family:'DejaVu Sans',sans-serif;letter-spacing:-0.400px;color:#000;-webkit-text-stroke:.25px #000;">37352198.6</span>
<span class="t" style="left:705.94px;top:949.60px;font-size:19.4px;font-family:'DejaVu Sans',sans-serif;letter-spacing:-0.400px;color:#000;-webkit-text-stroke:.25px #000;">33114135.1</span>
<span class="t" style="left:835.94px;top:949.60px;font-size:19.4px;font-family:'DejaVu Sans',sans-serif;letter-spacing:-0.400px;color:#000;-webkit-text-stroke:.25px #000;">38546492.5</span>
<span class="t" style="left:965.94px;top:949.60px;font-size:19.4px;font-family:'DejaVu Sans',sans-serif;letter-spacing:-0.400px;color:#000;-webkit-text-stroke:.25px #000;">24230835.3</span>
<span class="t" style="left:315.94px;top:979.60px;font-size:19.4px;font-family:'DejaVu Sans',sans-serif;letter-spacing:-0.400px;color:#000;-webkit-text-stroke:.25px #000;">4728583.03</span>
<span class="t" style="left:445.94px;top:979.60px;font-size:19.4px;font-family:'DejaVu Sans',sans-serif;letter-spacing:-0.400px;color:#000;-webkit-text-stroke:.25px #000;">2712387.91</span>
<span class="t" style="left:575.94px;top:979.60px;font-size:19.4px;font-family:'DejaVu Sans',sans-serif;letter-spacing:-0.400px;color:#000;-webkit-text-stroke:.25px #000;">2856216.81</span>
<span class="t" style="left:965.94px;top:979.60px;font-size:19.4px;font-family:'DejaVu Sans',sans-serif;letter-spacing:-0.400px;color:#000;-webkit-text-stroke:.25px #000;">4755201.03</span>
<span class="t" style="left:445.94px;top:1009.60px;font-size:19.4px;font-family:'DejaVu Sans',sans-serif;letter-spacing:-0.400px;color:#000;-webkit-text-stroke:.25px #000;">2489872.33</span>
<span class="t" style="left:55.94px;top:1039.60px;font-size:19.4px;font-family:'DejaVu Sans',sans-serif;letter-spacing:-0.400px;color:#000;-webkit-text-stroke:.25px #000;">1171409.27</span>
<span class="t" style="left:185.94px;top:1039.60px;font-size:19.4px;font-family:'DejaVu Sans',sans-serif;letter-spacing:-0.400px;color:#000;-webkit-text-stroke:.25px #000;">2131300.87</span>
<span class="t" style="left:315.94px;top:1039.60px;font-size:19.4px;font-family:'DejaVu Sans',sans-serif;letter-spacing:-0.400px;color:#000;-webkit-text-stroke:.25px #000;">1298970.21</span>
<span class="t" style="left:444.94px;top:1039.60px;font-size:19.4px;font-family:'DejaVu Sans',sans-serif;letter-spacing:-0.400px;color:#000;-webkit-text-stroke:.25px #000;">943840.294</span>
<span class="t" style="left:964.94px;top:1039.60px;font-size:19.4px;font-family:'DejaVu Sans',sans-serif;letter-spacing:-0.400px;color:#000;-webkit-text-stroke:.25px #000;">991348.244</span>
<span class="t" style="left:55.94px;top:1069.60px;font-size:19.4px;font-family:'DejaVu Sans',sans-serif;letter-spacing:-0.400px;color:#000;-webkit-text-stroke:.25px #000;">1986088.99</span>
<span class="t" style="left:184.94px;top:1069.60px;font-size:19.4px;font-family:'DejaVu Sans',sans-serif;letter-spacing:-0.400px;color:#000;-webkit-text-stroke:.25px #000;">6149232.96</span>
<span class="t" style="left:315.94px;top:1069.60px;font-size:19.4px;font-family:'DejaVu Sans',sans-serif;letter-spacing:-0.400px;color:#000;-webkit-text-stroke:.25px #000;">8200904.79</span>
<span class="t" style="left:444.94px;top:1069.60px;font-size:19.4px;font-family:'DejaVu Sans',sans-serif;letter-spacing:-0.400px;color:#000;-webkit-text-stroke:.25px #000;">2391390.78</span>
<span class="t" style="left:587.88px;top:1069.60px;font-size:19.4px;font-family:'DejaVu Sans',sans-serif;letter-spacing:-0.400px;color:#000;-webkit-text-stroke:.25px #000;">3629047.1</span>
<span class="t" style="left:704.94px;top:1069.60px;font-size:19.4px;font-family:'DejaVu Sans',sans-serif;letter-spacing:-0.400px;color:#000;-webkit-text-stroke:.25px #000;">8029182.58</span>
<span class="t" style="left:835.94px;top:1069.60px;font-size:19.4px;font-family:'DejaVu Sans',sans-serif;letter-spacing:-0.400px;color:#000;-webkit-text-stroke:.25px #000;">3075092.67</span>
<span class="t" style="left:965.94px;top:1069.60px;font-size:19.4px;font-family:'DejaVu Sans',sans-serif;letter-spacing:-0.400px;color:#000;-webkit-text-stroke:.25px #000;">5037515.83</span>
<span class="t" style="left:54.94px;top:1099.60px;font-size:19.4px;font-family:'DejaVu Sans',sans-serif;letter-spacing:-0.400px;color:#000;-webkit-text-stroke:.25px #000;">1043315.06</span>
<span class="t" style="left:184.94px;top:1099.60px;font-size:19.4px;font-family:'DejaVu Sans',sans-serif;letter-spacing:-0.400px;color:#000;-webkit-text-stroke:.25px #000;">2484737.34</span>
<span class="t" style="left:315.94px;top:1099.60px;font-size:19.4px;font-family:'DejaVu Sans',sans-serif;letter-spacing:-0.400px;color:#000;-webkit-text-stroke:.25px #000;">6740107.82</span>
<span class="t" style="left:445.94px;top:1099.60px;font-size:19.4px;font-family:'DejaVu Sans',sans-serif;letter-spacing:-0.400px;color:#000;-webkit-text-stroke:.25px #000;">4720179.09</span>
<span class="t" style="left:574.94px;top:1099.60px;font-size:19.4px;font-family:'DejaVu Sans',sans-serif;letter-spacing:-0.400px;color:#000;-webkit-text-stroke:.25px #000;">10493839.4</span>
<span class="t" style="left:704.94px;top:1099.60px;font-size:19.4px;font-family:'DejaVu Sans',sans-serif;letter-spacing:-0.400px;color:#000;-webkit-text-stroke:.25px #000;">5573557.88</span>
<span class="t" style="left:835.94px;top:1099.60px;font-size:19.4px;font-family:'DejaVu Sans',sans-serif;letter-spacing:-0.400px;color:#000;-webkit-text-stroke:.25px #000;">6708333.55</span>
<span class="t" style="left:964.94px;top:1099.60px;font-size:19.4px;font-family:'DejaVu Sans',sans-serif;letter-spacing:-0.400px;color:#000;-webkit-text-stroke:.25px #000;">245899.758</span>
<span class="t" style="left:315.94px;top:1129.60px;font-size:19.4px;font-family:'DejaVu Sans',sans-serif;letter-spacing:-0.400px;color:#000;-webkit-text-stroke:.25px #000;">739161.305</span>
<span class="t" style="left:445.94px;top:1129.60px;font-size:19.4px;font-family:'DejaVu Sans',sans-serif;letter-spacing:-0.400px;color:#000;-webkit-text-stroke:.25px #000;">475885.659</span>
<span class="t" style="left:705.94px;top:1129.60px;font-size:19.4px;font-family:'DejaVu Sans',sans-serif;letter-spacing:-0.400px;color:#000;-webkit-text-stroke:.25px #000;">639983.939</span>
<span class="t" style="left:835.94px;top:1129.60px;font-size:19.4px;font-family:'DejaVu Sans',sans-serif;letter-spacing:-0.400px;color:#000;-webkit-text-stroke:.25px #000;">349764.342</span>
<span class="t" style="left:964.94px;top:1129.60px;font-size:19.4px;font-family:'DejaVu Sans',sans-serif;letter-spacing:-0.400px;color:#000;-webkit-text-stroke:.25px #000;">693361.394</span>
<div class="abs" style="left:1212px;top:430px;width:136px;height:36px;border:4px solid #1a6b3c"></div>
<div class="abs" style="left:1338px;top:456px;width:12px;height:12px;background:#1a6b3c;border:solid #fff;border-width:2px 0 0 2px"></div>
</div>
<div id="sheettabs">
  <div class="abs" style="left:0;top:0;width:1568px;height:1.5px;background:#d0d0d0"></div>
  <div class="abs" style="left:120.4px;top:-0.5px;width:159.2px;height:46.9px;background:#fff;border:1.6px solid #b9b9b9;border-top:none;border-radius:0 0 7px 7px;box-shadow:0 1px 1.5px rgba(0,0,0,.18)"></div>
  <span class="t" style="left:157.70px;top:14.20px;font-size:23.2px;font-weight:bold;color:#1e7a46;">Sheet 1</span>
  <svg width="1568" height="53" viewBox="0 1528 1568 53" style="left:0;top:0" fill="none">
    <path d="M43.9 1544.6 V1565 L29.3 1554.8 Z" fill="#b6b6b6"/>
    <path d="M76 1544.6 V1565 L90.4 1554.8 Z" fill="#b6b6b6"/>
    <path d="M308.2 1553 H327.8 M318 1543.4 V1562.6" stroke="#555" stroke-width="3.4"/>
    <path d="M354.8 1529.4 V1571" stroke="#cdcdcd" stroke-width="1.6"/>
  </svg>
</div>

<div id="status">
  <span class="t" style="left:48.70px;top:13.70px;font-size:22.5px;letter-spacing:0.703px;color:#484848;-webkit-text-stroke:.25px #484848;">Ready</span>
  <div class="abs" style="left:930px;top:2px;width:74px;height:44px;background:#9e9e9e"></div>
  <svg width="1568" height="46" viewBox="0 1580 1568 46" style="left:0;top:0" fill="none" stroke-linejoin="round">
    <g stroke="#fff" stroke-width="2.3">
      <rect x="955.2" y="1591.2" width="23.6" height="23.4" rx="1.6"/>
      <path d="M963.1 1591.2 V1614.6 M970.9 1591.2 V1614.6 M955.2 1599 H978.8 M955.2 1606.8 H978.8"/>
    </g>
    <g stroke="#555" stroke-width="2.1">
      <rect x="1026.4" y="1591.1" width="25.2" height="23.6" rx="1.2"/>
      <rect x="1032.4" y="1595.2" width="13.2" height="15.4"/>
      <path d="M1035.2 1599.1 H1042.8 M1035.2 1603 H1042.8 M1035.2 1606.9 H1042.8" stroke-width="1.8"/>
      <rect x="1097.2" y="1591.1" width="25.4" height="23.6" rx="1.2"/>
      <path d="M1105.2 1591.1 V1605 M1113.2 1591.1 V1605 H1097.2"/>
    </g>
    <rect x="1162" y="1601.2" width="16" height="3.8" rx="1.2" fill="#555"/>
    <rect x="1191.6" y="1599.6" width="200.4" height="8.2" rx="4.1" fill="#a0a0a0"/>
    <circle cx="1291.9" cy="1603.8" r="16.6" fill="rgba(0,0,0,.12)"/>
    <circle cx="1291.9" cy="1603" r="16.3" fill="#fff"/>
    <path d="M1406.4 1603 H1422 M1414.2 1595.2 V1610.8" stroke="#4a4a4a" stroke-width="3.6"/>
  </svg>
  <span class="t" style="left:1455.40px;top:14.00px;font-size:22.5px;letter-spacing:1.787px;color:#484848;-webkit-text-stroke:.25px #484848;">100%</span>
</div>

</div>
</body></html>
